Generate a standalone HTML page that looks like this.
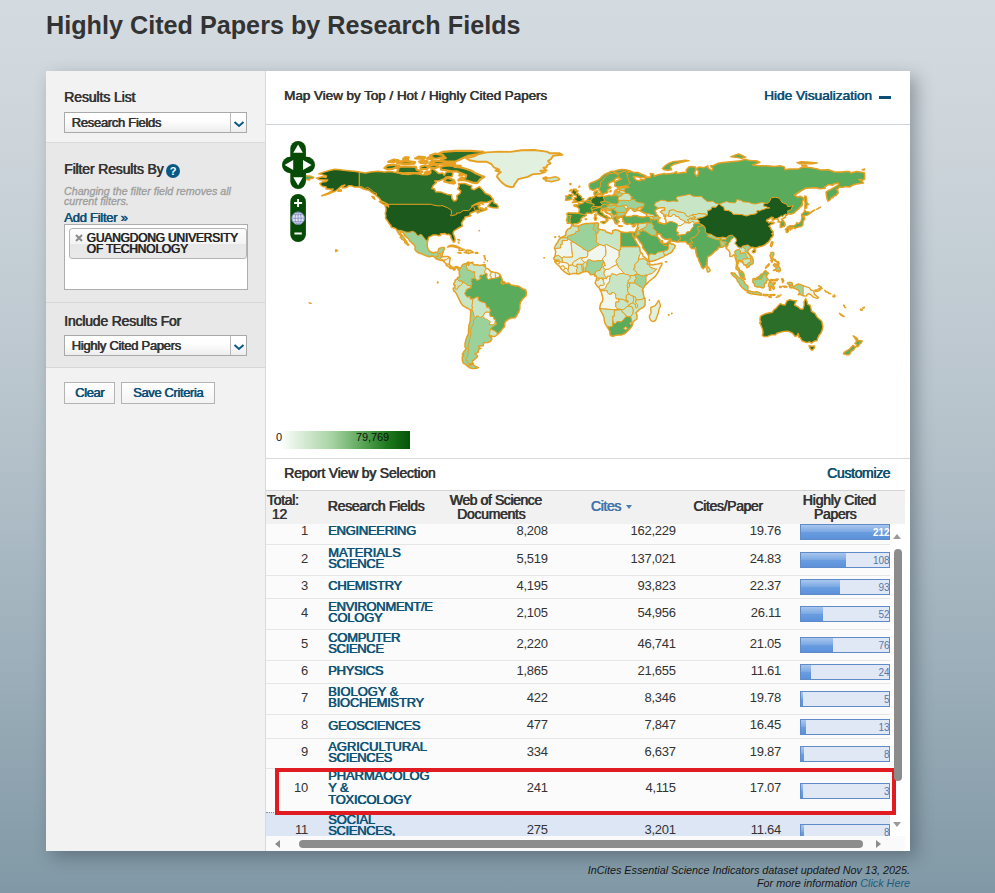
<!DOCTYPE html>
<html lang="en">
<head>
<meta charset="utf-8">
<title>Highly Cited Papers by Research Fields</title>
<style>
*{box-sizing:border-box;margin:0;padding:0}
html,body{width:995px;height:893px;overflow:hidden}
body{font-family:"Liberation Sans",Arial,sans-serif;color:#333;position:relative;
 background:linear-gradient(180deg,#d4dbe0 0px,#cdd5db 140px,#b9c5cd 400px,#9eb0bb 650px,#8199a6 893px);}
.abs{position:absolute}
/* synthetic-bold look: regular glyphs, slightly thickened */
.fb{font-weight:normal;-webkit-text-stroke:.2px currentColor;text-shadow:.55px 0 0 currentColor}
h1{position:absolute;left:46px;top:9.5px;font-size:25.2px;line-height:30px;font-weight:bold;color:#333;white-space:nowrap}
#panel{position:absolute;left:46px;top:71px;width:864px;height:780px;background:#fff;box-shadow:6px 6px 16px rgba(40,50,60,.38)}
#side{position:absolute;left:0;top:0;width:220px;height:780px;background:#f2f2f2;border-right:1px solid #d9d9d9}
.sec{position:absolute;left:0;width:219px}
.lbl{position:absolute;left:18px;font-size:14px;color:#333;white-space:nowrap;line-height:16px;letter-spacing:-.22px}
.sel{position:absolute;left:18px;width:183px;height:21px;border:1px solid #a9a9a9;background:linear-gradient(#fff 0,#fdfdfd 45%,#ededed 100%);font-size:13px;color:#333;line-height:19px;padding-left:6.5px;white-space:nowrap;letter-spacing:-.3px}
.sel i{position:absolute;right:0;top:0;width:16px;height:19px;border-left:1px solid #b9b9b9}
.btn{position:absolute;height:22px;border:1px solid #b3b3b3;background:linear-gradient(#fff,#f3f3f3);font-size:13px;color:#0b4f77;line-height:20px;text-align:center;white-space:nowrap;letter-spacing:-.38px}
#main{position:absolute;left:220px;top:0;width:644px;height:780px;background:#fff}
.link{color:#0b4f77}
.row{position:absolute;left:0;width:624px;border-bottom:1px solid #e6e6e6}
.row .num{position:absolute;font-size:13px;line-height:16px;color:#333;white-space:nowrap;letter-spacing:-.25px}
.row .nm{position:absolute;font-size:13px;color:#0b5275;white-space:nowrap}
.bar{position:absolute;left:534px;width:90px;height:16px;border:1px solid #5f8cc9;background:#e1e8f5;display:block}
.bar i{position:absolute;left:0;top:0;height:14px;background:linear-gradient(#a9c6ee 0,#7ca9e4 48%,#6a9de0 52%,#5c91da 100%)}
.bar b{position:absolute;right:-.5px;top:1px;font-size:10px;line-height:14px;font-weight:normal;color:#5877a6;letter-spacing:-.1px}
.bar b.w{color:#fff;font-weight:bold}
</style>
</head>
<body>
<h1>Highly Cited Papers by Research Fields</h1>
<div id="panel">
 <div id="side">
  <div class="sec" style="top:0;height:72px;background:#f2f2f2;border-bottom:1px solid #dadada"></div>
  <div class="lbl fb" style="top:18px;letter-spacing:-.1px">Results List</div>
  <div class="sel fb" style="top:41px">Research Fields<i><svg width="16" height="19" viewBox="0 0 16 19"><path d="M3.5 9 L8 13 L12.5 9" fill="none" stroke="#0b5a86" stroke-width="2"/></svg></i></div>

  <div class="sec" style="top:72px;height:160px;background:#e8e8e8;border-bottom:1px solid #d6d6d6"></div>
  <div class="lbl fb" style="top:90px;letter-spacing:-.15px">Filter Results By</div>
  <div class="abs" style="left:120px;top:92.5px;width:14px;height:14px;border-radius:7px;background:#075985;color:#fff;font-size:11px;font-weight:bold;line-height:14px;text-align:center">?</div>
  <div class="abs" style="left:18px;top:114.8px;font-size:10.7px;line-height:10.6px;font-style:italic;color:#9c9c9c;white-space:nowrap;-webkit-text-stroke:.3px #9c9c9c">Changing the filter field removes all<br>current filters.</div>
  <div class="abs link fb" style="left:18px;top:139px;font-size:13px;line-height:15px;white-space:nowrap;letter-spacing:-.25px">Add Filter »</div>
  <div class="abs" style="left:18px;top:153px;width:184px;height:66px;background:#fff;border:1px solid #adadad"></div>
  <div class="abs" style="left:23px;top:157px;width:178px;height:31px;border:1px solid #b5b5b5;border-radius:3px;background:linear-gradient(#fcfcfc 0,#f4f4f4 50%,#e7e7e7 52%,#e9e9e9 100%)"></div>
  <svg class="abs" style="left:29px;top:163px" width="8" height="8" viewBox="0 0 8 8"><path d="M1 1L7 7M7 1L1 7" stroke="#8a8a8a" stroke-width="2"/></svg>
  <div class="abs fb" style="left:40.5px;top:161.8px;font-size:12px;line-height:11px;color:#222;white-space:nowrap;letter-spacing:-.2px">GUANGDONG UNIVERSITY<br>OF TECHNOLOGY</div>

  <div class="sec" style="top:232px;height:65px;background:#e8e8e8;border-bottom:1px solid #d6d6d6"></div>
  <div class="lbl fb" style="top:242px;letter-spacing:-.2px">Include Results For</div>
  <div class="sel fb" style="top:264px">Highly Cited Papers<i><svg width="16" height="19" viewBox="0 0 16 19"><path d="M3.5 9 L8 13 L12.5 9" fill="none" stroke="#0b5a86" stroke-width="2"/></svg></i></div>

  <div class="btn fb" style="left:18px;top:311px;width:51px">Clear</div>
  <div class="btn fb" style="left:75px;top:311px;width:94px">Save Criteria</div>
 </div>
 <div id="main">
  <div class="abs fb" style="left:18px;top:17px;font-size:13.4px;line-height:16px;white-space:nowrap;color:#333">Map View by Top / Hot / Highly Cited Papers</div>
  <div class="abs link fb" style="left:498px;top:17px;font-size:13.6px;line-height:16px;white-space:nowrap">Hide Visualization</div>
  <div class="abs" style="left:613px;top:24.5px;width:12px;height:3px;background:#0b4f77"></div>
  <div class="abs" style="left:0;top:53px;width:644px;height:1px;background:#cfd4d8"></div>
<svg class="abs" style="left:0;top:54px" width="644" height="333" viewBox="266 125 644 333">
<defs>
<clipPath id="cAm"><path d="M316.5,178.2 322.2,176.8 326.1,177.4 326.4,176.0 323.0,174.9 319.0,173.8 324.6,171.9 329.3,170.5 334.8,169.2 341.9,170.0 348.2,170.7 354.5,171.3 359.2,171.9 365.5,172.9 370.2,171.9 378.1,171.3 384.4,172.1 390.7,171.6 400.1,173.2 401.7,174.1 408.0,174.6 411.2,174.0 414.3,173.2 422.2,174.7 426.9,174.7 430.0,173.8 430.0,171.9 431.6,168.3 435.2,170.5 437.1,172.1 438.7,173.6 442.6,173.0 444.2,175.2 446.6,171.9 452.1,171.8 452.9,173.6 452.1,176.5 445.8,177.1 444.2,178.7 439.5,180.7 434.8,180.9 436.3,182.6 433.2,185.5 431.9,188.6 434.8,189.1 435.6,191.8 441.1,192.1 447.4,194.4 451.6,194.7 451.8,198.1 453.7,200.9 456.0,200.4 457.1,198.8 456.8,195.7 460.0,193.3 460.8,191.0 457.6,188.9 459.2,186.2 458.4,183.4 464.7,183.4 468.6,185.0 471.8,185.8 471.3,188.6 474.1,189.7 478.1,187.3 479.3,186.6 482.8,190.2 485.2,193.3 489.9,195.2 492.2,198.1 493.3,199.6 491.5,200.6 486.7,202.5 480.4,202.3 475.7,203.9 471.8,206.2 474.1,205.0 479.6,204.2 480.0,205.5 478.1,206.4 479.2,208.8 481.2,209.1 484.4,209.4 486.1,207.5 487.0,209.1 485.2,210.2 481.2,211.3 477.3,213.0 477.0,211.7 479.6,210.2 475.7,210.6 475.4,211.3 472.6,212.2 470.2,213.3 469.9,215.4 471.0,215.8 468.6,216.3 465.2,217.1 464.7,217.7 464.4,219.3 463.1,220.4 462.2,222.0 461.5,223.2 461.9,224.5 462.3,226.1 460.0,227.2 458.4,228.1 456.5,229.4 453.8,231.1 453.0,233.2 454.5,236.8 455.1,239.3 454.8,241.7 453.5,242.0 452.4,240.2 451.0,237.7 450.8,235.7 448.9,234.3 446.9,234.7 445.0,233.6 442.6,233.8 440.3,234.0 440.6,235.5 438.7,235.7 436.3,234.9 433.2,234.9 431.6,235.8 428.5,237.4 427.8,240.6 427.2,243.7 427.2,246.4 428.2,249.1 429.7,251.3 431.6,252.2 432.9,252.8 435.6,252.2 437.9,251.9 438.7,249.2 439.0,248.4 441.9,247.6 444.2,247.6 444.5,248.8 443.4,250.8 443.0,252.7 442.3,253.9 442.2,255.5 441.4,256.5 442.6,256.8 445.8,256.5 448.2,256.6 450.2,257.9 449.7,261.0 449.4,263.4 449.7,265.0 451.3,266.5 452.9,267.6 455.2,267.0 456.8,266.4 459.2,267.8 460.0,268.9 461.5,266.9 462.3,265.0 463.4,264.2 466.3,263.4 468.6,262.0 468.9,262.9 468.0,264.2 468.5,265.4 469.4,263.7 471.0,262.4 473.3,263.9 474.1,265.0 477.3,264.8 479.6,265.4 483.6,264.7 483.9,265.8 485.2,266.5 485.9,268.1 488.3,268.9 490.7,271.6 493.8,272.2 496.2,272.4 498.5,273.6 500.1,274.7 501.7,278.4 502.5,280.7 501.7,281.5 504.8,282.3 505.6,283.4 508.8,283.1 511.1,285.0 512.7,285.3 515.9,286.1 518.2,285.9 520.6,287.3 522.9,289.1 525.6,289.7 526.4,292.5 526.1,295.7 522.9,298.8 520.6,302.0 519.8,305.1 519.8,309.1 518.7,312.2 516.8,315.5 515.1,317.7 511.1,318.0 508.3,319.3 505.6,321.3 504.7,323.2 504.7,326.4 502.5,328.7 500.9,331.1 498.5,333.5 497.0,335.0 494.8,336.5 492.7,336.5 489.4,335.2 491.1,337.4 491.9,339.0 490.5,341.3 488.3,342.4 483.6,342.7 483.3,345.7 478.9,345.9 479.0,347.6 480.9,348.4 479.5,349.0 478.5,350.0 478.1,352.4 474.9,353.9 477.3,355.5 477.6,356.8 474.9,359.1 472.6,361.0 472.6,362.7 473.5,364.0 471.6,364.0 469.6,364.8 469.4,366.2 467.0,365.7 465.5,364.2 463.4,363.4 462.3,360.2 462.2,357.1 463.9,355.2 462.3,354.7 463.9,351.6 466.3,348.4 465.0,347.3 465.0,343.7 465.8,340.1 466.7,337.4 468.3,334.2 468.6,328.7 468.9,325.6 470.2,321.6 470.5,316.1 470.7,311.4 470.4,310.3 468.6,308.7 465.5,307.2 462.8,305.6 461.1,303.2 459.6,300.4 458.1,297.2 456.8,294.4 455.4,292.2 453.7,290.9 453.2,288.6 454.8,286.9 455.2,285.4 453.8,285.0 454.0,283.1 455.2,281.5 455.2,280.2 457.1,279.0 457.6,277.6 459.5,277.1 459.6,275.5 459.2,272.8 459.5,270.8 458.5,270.2 457.8,268.7 456.0,267.5 454.6,268.4 455.2,269.8 453.7,270.0 453.2,269.2 452.1,268.6 450.5,268.4 449.6,268.0 449.4,267.2 447.7,266.2 446.1,265.3 446.3,264.2 445.0,262.6 443.3,261.2 443.1,260.6 441.1,260.4 438.7,259.8 436.0,258.7 434.0,256.6 431.9,256.0 429.3,256.8 426.1,255.8 423.8,254.9 420.9,253.5 418.2,252.7 415.9,250.8 414.8,249.2 415.4,247.6 414.3,245.3 411.9,242.9 409.6,241.0 408.8,239.0 407.2,237.6 404.9,235.8 403.3,232.7 400.4,231.4 400.6,233.5 402.5,235.8 404.1,238.2 406.0,240.6 407.2,242.9 408.8,245.0 408.0,245.4 407.1,244.3 404.9,242.6 404.5,240.6 401.7,239.0 401.2,237.7 400.1,237.7 401.2,236.2 398.9,234.0 397.3,231.1 396.7,230.2 396.5,229.2 394.8,228.3 393.5,227.7 391.3,227.2 390.7,225.1 389.3,223.9 388.3,222.0 387.5,220.9 386.3,219.3 385.5,217.9 385.8,215.4 385.2,213.8 386.0,210.6 386.0,208.6 384.9,205.5 387.9,205.8 388.5,207.0 388.3,205.1 387.5,204.3 386.7,203.6 384.7,202.8 382.0,201.5 380.5,200.4 379.7,198.8 378.1,197.3 376.2,195.7 375.7,194.9 374.2,194.1 371.0,191.8 367.9,189.7 366.3,189.9 364.2,189.2 361.1,187.7 358.4,187.0 354.5,187.0 351.3,185.8 348.2,185.8 347.4,187.0 345.0,187.8 342.2,188.1 343.5,186.2 345.0,185.1 341.9,185.8 339.5,187.8 338.4,188.9 335.6,191.0 332.4,192.2 328.5,194.1 325.3,194.9 321.7,195.7 324.6,194.4 327.7,193.3 331.6,191.0 333.2,189.1 330.9,189.2 328.5,188.9 326.1,189.1 326.1,187.0 322.2,186.2 320.6,184.7 319.8,183.4 321.7,182.6 322.2,182.0 326.1,181.5 327.7,179.9 324.6,179.9 319.8,179.8Z"/></clipPath>
<clipPath id="cEu"><path clip-rule="evenodd" d="M621.8,169.6 625.3,169.7 630.0,170.8 628.4,171.8 631.6,171.6 633.9,172.4 637.9,172.5 641.0,174.0 645.8,175.7 645.8,176.8 644.2,177.3 641.0,177.4 636.3,176.8 633.2,176.5 636.0,179.9 639.5,180.9 641.0,180.3 640.2,179.2 644.2,179.8 645.0,178.4 647.3,177.0 650.5,177.3 650.8,174.7 650.2,173.6 653.6,174.1 654.4,176.2 656.8,175.1 664.6,173.6 666.2,174.1 670.9,173.5 674.1,173.0 676.5,171.6 676.8,173.5 682.8,172.5 686.4,172.4 686.2,169.7 689.1,166.9 690.6,166.6 695.4,166.9 695.8,169.4 694.6,173.2 696.9,176.3 698.0,174.4 698.5,171.3 696.1,168.9 699.0,166.9 704.0,167.7 707.9,165.8 707.9,167.8 711.9,170.5 712.7,168.5 710.3,165.9 713.5,165.5 718.2,163.3 722.9,162.5 730.8,161.7 738.7,161.1 745.4,159.2 749.7,160.6 757.5,161.1 759.9,162.2 752.8,165.0 756.0,165.5 759.1,165.8 767.0,165.8 774.9,166.6 780.4,165.8 784.3,166.9 785.1,169.7 789.0,168.9 793.8,168.9 798.5,168.9 801.6,167.3 803.2,166.9 811.1,167.7 817.4,168.9 820.5,169.9 828.4,169.7 833.1,171.3 833.9,171.9 841.0,172.1 845.7,171.4 849.7,171.4 850.4,172.9 856.7,171.6 861.5,172.2 864.6,173.0 864.6,179.0 862.2,180.3 860.7,179.6 859.1,179.5 862.2,181.5 863.5,183.1 859.9,183.4 855.2,184.2 852.0,185.5 849.7,187.0 845.7,186.6 842.6,187.3 838.6,187.2 838.3,188.6 836.3,189.7 837.8,190.5 838.2,193.0 836.3,194.9 836.3,195.4 833.1,196.5 833.1,197.7 830.8,198.1 830.4,199.6 827.9,201.2 826.8,198.1 826.3,194.9 826.0,192.1 828.1,190.7 830.8,189.4 835.5,186.7 838.6,184.7 838.3,183.1 833.1,184.2 832.8,185.3 828.4,184.5 824.5,187.3 825.2,188.3 820.5,188.8 818.9,188.4 815.8,187.7 810.3,188.0 805.6,188.3 801.6,190.5 798.5,192.5 794.5,195.2 796.9,196.5 797.7,197.1 800.1,196.2 803.2,197.7 803.8,199.3 802.4,201.2 802.4,202.8 802.3,205.1 800.1,207.2 798.5,209.1 796.1,211.0 794.2,212.9 790.6,214.3 789.0,213.5 787.0,214.9 785.4,216.2 785.4,217.3 781.9,219.0 781.9,219.8 783.2,220.7 784.9,223.2 785.1,225.1 784.3,226.2 782.4,226.9 780.4,227.5 780.1,225.6 780.7,223.2 779.9,222.1 778.0,222.0 778.5,220.6 778.0,219.1 777.1,218.7 774.1,219.3 772.5,220.3 772.0,219.3 773.3,217.6 771.7,217.1 769.4,218.7 767.0,219.8 766.5,220.9 768.3,221.8 768.6,222.9 771.2,222.0 774.1,222.6 773.9,223.4 771.2,224.3 769.0,226.2 770.5,227.5 771.4,229.9 773.0,231.4 773.1,232.8 771.7,233.8 773.3,234.4 772.7,236.6 771.2,237.7 769.7,240.6 768.6,241.8 767.0,243.1 765.4,244.5 763.8,245.4 761.2,246.4 759.9,246.5 757.2,247.5 755.0,248.0 754.7,249.5 753.9,247.6 752.0,247.3 751.2,247.6 749.4,248.8 748.1,250.8 747.6,251.9 748.9,253.5 750.5,255.5 751.7,256.3 752.8,258.7 753.3,261.0 753.1,262.9 752.0,264.2 750.0,265.1 749.2,266.5 746.8,267.8 746.2,266.1 745.7,265.1 744.2,265.0 743.4,263.7 742.6,262.6 741.0,261.5 740.1,261.5 740.1,260.4 738.7,260.4 738.5,262.3 737.4,265.0 737.5,266.9 739.1,268.4 739.4,270.2 741.0,270.8 742.1,271.7 743.7,273.6 744.2,275.2 744.0,277.1 745.3,279.3 744.2,279.5 742.6,278.2 740.7,276.9 739.8,275.2 739.1,272.8 739.0,271.3 738.2,270.5 736.0,268.9 736.0,267.3 736.4,265.3 736.6,262.9 736.3,261.0 735.2,257.9 734.9,255.5 733.8,254.7 731.6,256.6 729.7,256.3 730.0,253.9 729.7,251.9 728.4,250.3 727.3,249.2 726.5,248.8 725.7,246.4 724.2,245.8 722.9,247.0 721.3,247.2 720.1,247.3 718.2,247.8 717.9,249.1 716.6,250.2 715.0,251.1 713.5,252.7 710.8,255.2 709.2,256.0 707.6,257.1 707.3,260.2 707.0,262.6 707.0,265.3 705.9,265.4 705.6,266.9 704.3,267.5 703.2,268.7 701.6,267.3 700.9,265.0 699.8,262.6 699.0,261.0 698.2,258.2 696.9,256.3 696.1,253.2 695.8,251.3 695.7,248.8 695.5,247.2 694.9,248.4 693.0,248.8 691.4,248.3 689.8,246.4 691.9,245.4 690.2,245.4 689.4,244.8 688.6,244.2 687.3,243.7 686.2,242.3 685.9,241.5 682.8,241.8 679.6,241.8 678.2,242.0 675.7,241.7 673.8,241.2 671.4,241.0 670.9,239.3 669.8,238.8 667.3,239.6 664.6,239.0 662.3,237.6 661.2,236.0 660.4,234.3 658.4,233.6 657.7,234.4 656.8,234.4 656.8,235.4 657.4,236.6 658.4,238.2 659.9,239.5 660.2,241.2 661.2,242.5 661.8,240.6 662.4,240.9 662.3,242.8 663.9,243.4 666.2,243.6 668.3,241.7 669.5,240.4 670.0,240.1 670.0,242.3 670.9,243.7 673.5,244.3 675.4,246.1 674.6,247.8 673.3,249.4 672.2,251.7 670.2,253.2 668.3,253.9 667.5,254.7 664.8,255.4 663.4,256.9 660.7,257.9 658.4,259.1 656.0,260.1 652.8,260.9 652.1,261.3 649.7,261.5 649.2,260.6 648.6,258.2 648.6,255.7 647.3,253.9 646.1,251.9 644.2,249.5 642.8,248.0 642.6,246.1 641.8,244.0 639.9,242.3 639.8,241.4 638.7,240.1 637.1,237.9 636.0,237.3 636.2,235.1 635.4,237.4 635.0,237.9 633.9,236.9 633.2,235.8 632.5,234.4 632.1,232.2 635.0,232.2 636.2,230.3 636.5,229.2 637.3,227.5 637.7,225.6 638.2,223.9 637.1,223.9 635.5,223.7 634.3,224.5 632.4,224.7 629.4,223.6 627.6,224.5 625.6,223.7 624.2,223.2 624.0,221.8 622.6,221.2 623.4,220.1 622.5,219.3 622.5,218.2 622.1,217.3 620.6,217.1 619.5,217.4 619.0,218.2 618.7,218.7 617.9,218.2 616.9,217.7 616.8,218.5 617.4,219.6 617.9,220.4 619.0,221.4 619.0,222.1 618.2,221.8 617.7,222.6 617.7,224.0 616.6,224.0 616.2,223.2 615.4,223.6 614.6,222.0 615.1,221.2 614.3,220.9 613.9,220.1 613.0,219.1 611.7,217.7 611.7,216.0 611.4,215.5 610.3,214.6 608.8,213.8 606.4,213.0 605.1,211.9 604.7,210.6 603.7,210.2 602.8,210.5 602.6,210.8 602.6,209.7 602.0,209.5 600.7,210.0 600.6,211.0 600.7,211.9 602.6,213.0 603.6,214.7 605.1,215.5 606.7,215.7 606.4,216.3 608.3,217.1 610.3,218.4 610.0,218.8 608.3,217.9 607.3,219.0 608.1,220.1 607.2,221.0 606.4,221.8 605.9,221.4 606.4,220.4 605.9,218.5 604.5,217.6 603.4,217.3 602.5,216.6 600.6,215.8 598.8,214.7 597.7,214.0 597.3,212.4 596.2,211.7 595.1,211.6 594.1,212.2 593.0,212.5 591.6,213.6 589.7,213.3 588.8,213.2 587.5,213.0 586.2,213.5 585.9,214.6 586.2,215.5 584.7,216.5 582.8,216.9 582.0,217.7 580.7,219.3 581.4,220.4 580.4,221.2 580.1,222.3 578.4,222.9 577.7,223.7 574.3,223.7 572.9,224.7 571.8,224.5 571.1,223.6 569.9,222.9 568.6,223.2 567.2,223.2 567.3,221.0 566.4,220.6 566.7,219.3 567.3,217.7 567.3,215.7 567.2,214.6 566.6,213.8 568.6,212.7 570.2,212.9 572.5,212.9 575.2,213.0 578.4,213.2 579.2,211.4 579.3,209.5 579.3,208.8 577.7,207.3 576.8,206.7 574.3,206.2 573.8,205.3 575.7,204.7 578.1,205.0 578.7,205.0 578.5,203.2 579.3,203.7 581.4,203.6 583.6,202.6 583.7,201.4 585.3,201.0 586.7,200.6 587.5,199.6 588.6,198.2 589.7,197.6 592.1,197.4 592.5,196.9 594.6,197.1 594.7,196.0 594.7,195.1 594.0,194.1 594.1,192.2 594.7,191.6 596.9,190.8 597.9,190.7 597.6,192.5 598.2,192.9 597.3,193.6 596.6,194.6 596.3,195.2 596.9,195.8 598.5,196.5 600.4,196.2 602.5,195.8 603.6,196.6 606.4,196.0 610.0,195.2 610.6,195.8 612.1,195.8 612.7,195.1 614.3,194.4 614.3,192.1 615.1,191.0 616.8,190.7 617.7,191.8 619.5,191.4 619.6,189.7 618.2,189.1 618.0,188.3 620.6,187.8 625.3,187.8 628.7,187.2 626.1,186.2 622.1,186.4 617.4,187.2 614.7,185.8 615.1,183.1 614.4,182.3 616.6,181.0 619.8,179.5 621.2,179.0 619.3,177.9 616.3,178.1 614.7,179.5 613.8,181.0 611.1,182.0 609.2,183.1 608.4,184.7 608.3,186.1 610.5,186.9 611.0,187.7 609.2,188.9 607.5,190.0 607.2,191.8 606.4,193.0 604.3,193.2 603.6,194.3 601.7,194.3 601.2,193.0 599.9,191.0 598.8,188.8 597.9,188.1 596.2,188.8 594.1,190.0 592.2,190.2 590.2,189.1 589.4,187.3 589.1,185.5 589.4,183.9 591.4,182.6 594.6,181.5 596.9,180.4 599.3,179.2 600.9,177.6 602.5,176.0 604.0,174.7 606.1,173.6 608.8,172.4 611.1,171.4 615.1,171.0 618.2,170.0Z M626.9,216.6 630.8,216.6 633.6,215.4 636.6,215.4 638.7,216.5 641.8,217.1 644.5,216.9 646.5,216.2 646.9,215.1 645.8,213.8 643.4,212.7 641.3,211.6 639.9,211.0 639.0,210.3 640.2,209.9 641.5,208.8 642.9,207.3 641.3,207.3 639.1,207.8 636.8,208.4 636.3,209.5 638.7,210.2 637.1,210.6 635.0,211.4 633.9,211.3 632.4,210.0 634.1,209.1 631.6,208.8 630.5,208.1 629.5,208.6 628.0,210.2 627.8,210.8 626.4,211.9 626.2,213.0 625.1,214.1 625.3,215.4 625.6,216.2Z M654.9,211.1 656.0,209.5 658.4,208.3 661.5,207.7 664.6,207.8 664.6,210.2 662.0,210.3 661.5,211.4 660.4,211.6 662.3,213.5 663.9,214.6 663.9,216.2 665.9,216.6 664.5,218.5 665.8,219.8 666.1,222.5 665.9,223.4 663.1,223.9 660.4,222.8 658.4,222.3 658.2,221.0 658.7,219.6 659.1,218.0 660.4,218.0 659.1,217.6 657.9,215.7 656.0,213.8 656.0,212.5Z"/></clipPath>
<clipPath id="cAf"><path d="M632.5,234.4 632.1,232.2 630.0,231.9 628.1,232.5 624.5,232.4 620.9,231.7 617.7,230.3 615.1,229.7 612.8,230.6 612.7,232.7 611.6,233.8 608.8,232.8 605.6,231.7 605.3,230.6 601.7,229.7 599.3,229.2 597.3,228.3 598.2,227.0 598.2,225.4 598.4,223.4 597.3,222.8 595.4,222.9 592.2,223.2 589.1,223.6 585.9,223.4 582.8,224.2 579.6,225.4 577.7,226.2 576.5,225.9 573.8,226.1 572.7,225.0 571.8,225.3 570.5,228.0 567.8,229.1 566.2,231.4 565.8,233.5 565.8,235.1 563.6,236.5 560.7,237.7 558.8,239.9 557.6,242.5 556.0,244.5 554.4,248.0 555.2,250.0 555.7,251.6 555.2,255.5 553.6,258.4 554.7,260.2 554.9,262.0 556.3,263.4 557.7,264.8 559.6,266.4 560.4,267.8 562.0,269.7 563.3,270.8 566.2,273.0 569.2,274.6 572.5,273.6 576.2,273.5 578.1,274.1 581.2,272.7 583.1,272.1 585.5,271.6 588.0,271.6 589.4,273.0 590.6,274.7 593.0,274.6 594.6,274.3 595.4,275.4 596.5,276.5 596.6,277.9 596.2,279.9 595.7,281.5 595.1,282.8 596.2,284.6 597.7,286.5 599.6,288.6 600.4,290.6 601.4,292.5 602.1,295.0 602.9,298.3 602.5,301.2 600.9,303.2 600.1,305.6 599.8,308.6 600.9,311.1 602.9,314.6 604.0,317.4 604.2,320.1 605.0,323.4 607.0,326.5 608.3,328.7 609.9,331.6 609.9,333.3 610.2,335.2 611.6,336.0 612.7,336.3 616.2,335.2 618.2,335.0 621.3,335.0 624.5,333.8 626.1,332.5 628.4,330.3 630.0,328.4 631.6,326.7 632.8,324.0 633.0,322.3 634.7,320.5 636.9,319.0 637.1,316.1 636.3,313.8 636.0,312.7 637.9,311.1 639.5,309.4 643.1,307.5 645.1,305.1 645.1,302.0 645.0,298.5 643.9,296.9 643.4,294.1 643.1,292.2 642.3,290.9 642.9,288.9 643.7,287.5 645.0,285.4 646.5,284.2 648.6,281.8 651.3,279.5 653.9,277.7 656.5,274.7 658.4,271.6 659.6,268.7 661.2,265.8 661.8,265.0 662.0,262.9 659.9,263.4 657.6,263.9 654.4,264.5 651.3,265.1 649.4,263.6 649.2,262.8 649.4,261.8 648.1,260.6 646.1,258.5 644.2,256.9 643.1,256.5 642.8,254.7 641.8,253.2 640.2,251.9 639.9,249.2 639.5,247.2 638.7,246.1 637.3,243.9 636.3,242.1 635.0,239.8 634.1,237.7 633.0,236.2Z"/></clipPath>
<clipPath id="cBo"><path d="M752.8,279.1 753.9,278.4 756.0,279.0 756.8,277.6 759.1,276.5 760.7,274.4 762.7,273.6 764.2,271.6 765.4,270.5 766.5,271.6 768.6,273.2 767.3,274.7 766.5,276.0 767.0,277.9 768.6,279.9 766.7,280.6 766.2,282.8 764.6,283.9 764.3,286.2 763.8,287.8 761.8,287.8 759.9,286.9 757.2,287.0 754.7,286.2 754.4,283.9 752.8,282.3 752.8,280.7Z"/></clipPath>
<clipPath id="cNg"><path d="M787.5,282.8 789.8,282.1 792.2,282.8 792.5,285.3 793.8,286.7 796.1,285.0 798.5,284.0 803.2,285.6 806.4,286.9 809.2,287.6 811.1,290.2 813.4,290.9 814.1,292.5 814.2,294.1 816.6,296.0 818.6,297.6 817.4,298.3 813.4,297.2 811.1,294.9 808.7,293.6 807.1,294.6 806.4,296.1 803.2,295.8 800.1,294.4 798.2,294.7 799.7,292.8 798.5,290.2 794.5,288.4 791.4,287.5 790.3,288.0 789.0,285.9 791.4,285.3 789.3,285.0 787.5,283.7Z"/></clipPath>
<clipPath id="cIr"><path d="M565.5,200.3 568.3,200.1 571.4,199.3 571.8,197.3 572.4,195.7 571.4,194.6 569.4,194.4 568.0,195.7 565.5,196.2 566.2,197.6 565.8,198.8Z"/></clipPath>
<clipPath id="cTi"><path d="M775.7,297.7 778.0,295.4 781.5,294.7 780.4,296.1 778.0,297.2Z"/></clipPath>
<clipPath id="cHi"><path d="M464.1,252.5 467.0,253.0 468.5,253.6 471.0,252.7 473.5,252.5 472.1,251.3 470.2,250.3 468.2,250.3 465.8,250.2 466.9,251.6 464.7,252.1Z"/></clipPath>
</defs>
<g stroke="#e6a022" stroke-width="1" stroke-linejoin="round">
<g clip-path="url(#cAm)">
<rect x="266" y="125" width="330" height="333" fill="#c8e6c5" stroke="none"/>
<path d="M359.2,166.6 502.5,166.6 502.5,216.9 359.2,216.9Z" fill="#2a6e2a"/>
<path d="M392.3,228.8 447.4,228.8 447.4,261.0 392.3,261.0Z" fill="#9bd29b"/>
<path d="M387.1,204.3 431.3,204.3 432.3,204.8 437.1,205.8 440.3,205.9 442.0,205.5 447.7,207.8 449.7,209.1 451.3,210.2 451.5,213.8 450.4,215.4 451.3,215.8 455.2,214.9 456.8,214.1 456.5,213.0 460.3,212.9 461.1,211.9 463.1,210.6 468.6,210.6 469.7,210.0 470.7,208.6 472.2,206.9 473.7,207.0 474.4,207.5 474.4,209.4 475.1,210.3 475.7,211.0 486.7,218.5 486.7,243.7 455.2,246.9 428.3,240.7 425.3,239.9 424.5,238.2 423.0,236.6 421.4,234.6 419.8,234.6 418.7,235.8 416.7,234.9 416.0,233.3 413.5,231.4 410.8,231.4 410.8,232.2 406.4,232.2 400.4,230.3 396.8,230.3 384.4,231.1 376.5,204.3Z" fill="#1b5a1c"/>
<path d="M359.2,166.6 359.2,186.6 362.3,186.9 364.7,188.6 367.9,187.5 371.8,190.2 373.7,192.2 376.5,193.3 376.5,195.4 368.6,196.5 313.5,202.8 313.5,166.6Z" fill="#1b5a1c"/>
<path d="M435.9,258.7 436.0,257.6 436.8,256.2 438.9,256.2 437.9,254.4 437.9,253.5 440.8,253.5 440.8,256.5 442.3,256.6 440.8,257.9 440.4,258.8 439.3,259.9 437.9,260.6 435.2,259.5Z" fill="#9bd29b"/>
<path d="M440.8,253.3 442.0,252.4 444.2,252.4 444.2,256.5 440.8,256.5Z" fill="#f1f7ef"/>
<path d="M439.3,259.9 440.4,258.8 441.9,259.5 443.0,259.6 443.1,260.7 442.6,261.2 439.2,260.7Z" fill="#f1f7ef"/>
<path d="M440.6,258.8 440.8,257.9 442.3,256.6 442.6,255.7 450.5,255.7 450.4,258.0 447.8,258.4 446.1,259.8 444.5,259.9 444.7,260.7 443.7,261.2 443.0,260.6 443.0,259.6 441.9,259.5Z" fill="#f1f7ef"/>
<path d="M450.4,258.0 447.8,258.4 446.1,259.8 444.5,259.9 444.7,260.7 443.7,261.2 442.6,261.8 445.8,264.5 446.3,264.0 447.8,264.2 449.4,264.3 450.5,264.2 451.3,257.9Z" fill="#f1f7ef"/>
<path d="M446.3,264.0 447.8,264.2 449.4,264.3 450.5,265.0 451.1,266.4 450.7,266.5 450.7,268.9 448.9,269.1 445.0,266.1 445.5,264.2Z" fill="#c8e6c5"/>
<path d="M451.1,266.2 450.7,266.5 450.7,269.1 453.7,270.8 458.4,270.8 458.5,270.2 459.6,269.1 459.3,267.8 460.0,267.0 456.8,265.8 452.1,265.9Z" fill="#c8e6c5"/>
<path d="M464.7,315.8 497.8,315.8 497.8,369.7 464.7,369.7Z" fill="#9bd29b"/>
<path d="M470.4,310.3 471.8,309.1 473.3,312.2 473.8,315.4 475.7,317.7 473.7,320.1 473.3,324.0 471.3,327.9 470.2,331.1 471.0,333.9 470.2,337.4 469.1,342.1 468.2,346.1 468.3,350.0 468.2,353.1 467.4,356.3 465.8,359.4 467.4,361.5 467.8,363.4 473.5,364.0 471.0,369.7 455.2,369.7 455.2,308.3Z" fill="#9bd29b"/>
<path d="M489.2,335.0 489.6,333.5 489.9,331.1 490.5,329.0 493.0,330.0 493.7,330.2 496.5,332.0 497.4,333.0 497.1,334.6 499.3,335.0 497.8,338.2 489.1,336.6Z" fill="#c8e6c5"/>
<path d="M482.6,316.5 485.2,312.2 488.1,311.9 489.6,312.7 490.0,314.1 490.2,316.3 493.0,316.6 493.7,317.1 494.0,319.3 495.7,319.4 495.2,321.8 494.9,323.5 493.3,324.6 492.2,324.8 488.9,324.5 490.5,321.8 488.6,320.5 486.7,319.3 485.2,318.7Z" fill="#f1f7ef"/>
<path d="M471.8,309.1 472.6,307.0 471.6,305.9 472.1,304.8 472.7,301.2 471.8,298.7 473.3,298.8 476.3,297.1 478.4,296.9 478.4,300.1 480.0,301.2 482.3,302.0 485.2,302.8 486.3,305.1 486.6,307.2 489.2,307.2 489.4,308.7 490.5,309.8 490.2,311.4 489.6,312.7 488.1,311.9 485.2,312.2 482.6,316.5 480.0,317.4 478.5,316.3 476.8,315.8 475.7,317.7 473.8,315.4 473.3,312.2Z" fill="#c8e6c5"/>
<path d="M470.4,310.3 471.8,309.1 472.6,307.0 471.6,305.9 472.1,304.8 472.7,301.2 471.8,298.7 470.0,298.8 470.2,296.5 467.4,296.9 466.3,296.0 464.7,293.3 465.9,291.7 466.4,289.7 469.7,288.1 471.1,288.1 471.0,285.8 467.8,285.3 465.5,283.5 462.8,281.7 462.2,283.9 460.4,285.6 458.4,286.2 457.6,288.6 456.0,289.4 454.8,288.4 454.8,286.9 450.5,286.9 450.5,311.4Z" fill="#c8e6c5"/>
<path d="M454.8,286.9 454.8,288.4 456.0,289.4 457.6,288.6 458.4,286.2 460.4,285.6 462.2,283.9 462.8,281.7 461.1,280.9 459.2,280.9 457.1,279.1 452.1,279.1 452.1,286.9Z" fill="#c8e6c5"/>
<path d="M458.5,270.2 459.6,269.1 459.3,267.8 461.5,265.8 466.3,261.0 468.9,262.9 467.0,264.2 466.3,266.5 467.2,268.3 467.2,269.8 470.8,270.5 471.9,271.9 474.9,271.7 474.4,274.4 475.2,276.1 474.4,277.1 475.4,277.9 475.9,279.6 477.3,281.5 472.6,288.6 471.1,288.1 471.0,285.8 467.8,285.3 465.5,283.5 462.8,281.7 461.1,280.9 459.2,280.9 457.1,279.1 455.2,279.1 455.2,270.2Z" fill="#9bd29b"/>
<path d="M468.9,262.9 467.0,264.2 466.3,266.5 467.2,268.3 467.2,269.8 470.8,270.5 471.9,271.9 474.9,271.7 474.4,274.4 475.2,276.1 474.4,277.1 475.4,277.9 475.9,279.6 478.9,281.5 483.6,281.5 486.7,276.8 485.6,273.3 484.5,272.2 485.2,270.5 486.7,268.1 488.3,267.3 486.7,261.8 468.9,261.3Z" fill="#c8e6c5"/>
<path d="M486.7,268.1 485.2,270.5 484.5,272.2 485.6,273.3 486.6,273.3 487.0,274.4 486.7,277.2 487.2,278.7 488.5,279.5 489.9,279.1 491.5,278.5 491.0,276.3 489.9,275.2 491.1,273.3 491.3,272.1 491.5,270.5 489.9,268.1Z" fill="#f1f7ef"/>
<path d="M491.3,272.1 491.1,273.3 489.9,275.2 491.0,276.3 491.5,278.5 492.2,278.5 493.2,278.5 496.2,278.0 495.5,276.8 495.4,274.4 496.2,272.4 496.2,271.3 491.5,271.3Z" fill="#f1f7ef"/>
<path d="M496.2,272.4 495.4,274.4 495.5,276.8 496.2,278.0 498.5,277.6 500.0,274.9 500.9,273.6 498.5,271.3 496.2,271.3Z" fill="#f1f7ef"/>
<path d="M500.0,274.9 498.5,277.6 496.2,278.0 493.2,278.5 492.2,278.5 489.9,279.1 488.5,279.5 487.2,278.7 486.7,277.2 487.0,274.4 486.6,273.3 485.6,273.3 484.5,274.4 482.3,275.2 480.1,275.0 479.6,277.6 481.4,278.0 478.1,280.2 476.8,280.4 475.9,279.6 475.6,278.8 474.4,278.4 471.3,278.8 471.3,279.8 472.2,280.6 471.0,280.7 471.0,281.8 471.9,283.2 471.1,288.1 469.7,288.1 466.4,289.7 465.9,291.7 464.7,293.3 466.3,296.0 467.4,296.9 470.2,296.5 470.0,298.8 471.8,298.7 473.3,298.8 476.3,297.1 478.4,296.9 478.4,300.1 480.0,301.2 482.3,302.0 485.2,302.8 486.3,305.1 486.6,307.2 489.2,307.2 489.4,308.7 490.5,309.8 490.2,311.4 489.7,312.7 490.0,314.1 490.2,316.3 493.0,316.6 493.7,317.1 494.0,319.3 495.7,319.4 495.2,321.8 496.5,322.8 496.6,324.3 493.3,326.2 490.5,329.0 493.0,330.0 493.7,330.2 496.5,332.0 497.4,333.0 497.1,334.6 534.0,335.0 534.0,272.1Z" fill="#5aab5c"/>
</g>
<path d="M316.5,178.2 322.2,176.8 326.1,177.4 326.4,176.0 323.0,174.9 319.0,173.8 324.6,171.9 329.3,170.5 334.8,169.2 341.9,170.0 348.2,170.7 354.5,171.3 359.2,171.9 365.5,172.9 370.2,171.9 378.1,171.3 384.4,172.1 390.7,171.6 400.1,173.2 401.7,174.1 408.0,174.6 411.2,174.0 414.3,173.2 422.2,174.7 426.9,174.7 430.0,173.8 430.0,171.9 431.6,168.3 435.2,170.5 437.1,172.1 438.7,173.6 442.6,173.0 444.2,175.2 446.6,171.9 452.1,171.8 452.9,173.6 452.1,176.5 445.8,177.1 444.2,178.7 439.5,180.7 434.8,180.9 436.3,182.6 433.2,185.5 431.9,188.6 434.8,189.1 435.6,191.8 441.1,192.1 447.4,194.4 451.6,194.7 451.8,198.1 453.7,200.9 456.0,200.4 457.1,198.8 456.8,195.7 460.0,193.3 460.8,191.0 457.6,188.9 459.2,186.2 458.4,183.4 464.7,183.4 468.6,185.0 471.8,185.8 471.3,188.6 474.1,189.7 478.1,187.3 479.3,186.6 482.8,190.2 485.2,193.3 489.9,195.2 492.2,198.1 493.3,199.6 491.5,200.6 486.7,202.5 480.4,202.3 475.7,203.9 471.8,206.2 474.1,205.0 479.6,204.2 480.0,205.5 478.1,206.4 479.2,208.8 481.2,209.1 484.4,209.4 486.1,207.5 487.0,209.1 485.2,210.2 481.2,211.3 477.3,213.0 477.0,211.7 479.6,210.2 475.7,210.6 475.4,211.3 472.6,212.2 470.2,213.3 469.9,215.4 471.0,215.8 468.6,216.3 465.2,217.1 464.7,217.7 464.4,219.3 463.1,220.4 462.2,222.0 461.5,223.2 461.9,224.5 462.3,226.1 460.0,227.2 458.4,228.1 456.5,229.4 453.8,231.1 453.0,233.2 454.5,236.8 455.1,239.3 454.8,241.7 453.5,242.0 452.4,240.2 451.0,237.7 450.8,235.7 448.9,234.3 446.9,234.7 445.0,233.6 442.6,233.8 440.3,234.0 440.6,235.5 438.7,235.7 436.3,234.9 433.2,234.9 431.6,235.8 428.5,237.4 427.8,240.6 427.2,243.7 427.2,246.4 428.2,249.1 429.7,251.3 431.6,252.2 432.9,252.8 435.6,252.2 437.9,251.9 438.7,249.2 439.0,248.4 441.9,247.6 444.2,247.6 444.5,248.8 443.4,250.8 443.0,252.7 442.3,253.9 442.2,255.5 441.4,256.5 442.6,256.8 445.8,256.5 448.2,256.6 450.2,257.9 449.7,261.0 449.4,263.4 449.7,265.0 451.3,266.5 452.9,267.6 455.2,267.0 456.8,266.4 459.2,267.8 460.0,268.9 461.5,266.9 462.3,265.0 463.4,264.2 466.3,263.4 468.6,262.0 468.9,262.9 468.0,264.2 468.5,265.4 469.4,263.7 471.0,262.4 473.3,263.9 474.1,265.0 477.3,264.8 479.6,265.4 483.6,264.7 483.9,265.8 485.2,266.5 485.9,268.1 488.3,268.9 490.7,271.6 493.8,272.2 496.2,272.4 498.5,273.6 500.1,274.7 501.7,278.4 502.5,280.7 501.7,281.5 504.8,282.3 505.6,283.4 508.8,283.1 511.1,285.0 512.7,285.3 515.9,286.1 518.2,285.9 520.6,287.3 522.9,289.1 525.6,289.7 526.4,292.5 526.1,295.7 522.9,298.8 520.6,302.0 519.8,305.1 519.8,309.1 518.7,312.2 516.8,315.5 515.1,317.7 511.1,318.0 508.3,319.3 505.6,321.3 504.7,323.2 504.7,326.4 502.5,328.7 500.9,331.1 498.5,333.5 497.0,335.0 494.8,336.5 492.7,336.5 489.4,335.2 491.1,337.4 491.9,339.0 490.5,341.3 488.3,342.4 483.6,342.7 483.3,345.7 478.9,345.9 479.0,347.6 480.9,348.4 479.5,349.0 478.5,350.0 478.1,352.4 474.9,353.9 477.3,355.5 477.6,356.8 474.9,359.1 472.6,361.0 472.6,362.7 473.5,364.0 471.6,364.0 469.6,364.8 469.4,366.2 467.0,365.7 465.5,364.2 463.4,363.4 462.3,360.2 462.2,357.1 463.9,355.2 462.3,354.7 463.9,351.6 466.3,348.4 465.0,347.3 465.0,343.7 465.8,340.1 466.7,337.4 468.3,334.2 468.6,328.7 468.9,325.6 470.2,321.6 470.5,316.1 470.7,311.4 470.4,310.3 468.6,308.7 465.5,307.2 462.8,305.6 461.1,303.2 459.6,300.4 458.1,297.2 456.8,294.4 455.4,292.2 453.7,290.9 453.2,288.6 454.8,286.9 455.2,285.4 453.8,285.0 454.0,283.1 455.2,281.5 455.2,280.2 457.1,279.0 457.6,277.6 459.5,277.1 459.6,275.5 459.2,272.8 459.5,270.8 458.5,270.2 457.8,268.7 456.0,267.5 454.6,268.4 455.2,269.8 453.7,270.0 453.2,269.2 452.1,268.6 450.5,268.4 449.6,268.0 449.4,267.2 447.7,266.2 446.1,265.3 446.3,264.2 445.0,262.6 443.3,261.2 443.1,260.6 441.1,260.4 438.7,259.8 436.0,258.7 434.0,256.6 431.9,256.0 429.3,256.8 426.1,255.8 423.8,254.9 420.9,253.5 418.2,252.7 415.9,250.8 414.8,249.2 415.4,247.6 414.3,245.3 411.9,242.9 409.6,241.0 408.8,239.0 407.2,237.6 404.9,235.8 403.3,232.7 400.4,231.4 400.6,233.5 402.5,235.8 404.1,238.2 406.0,240.6 407.2,242.9 408.8,245.0 408.0,245.4 407.1,244.3 404.9,242.6 404.5,240.6 401.7,239.0 401.2,237.7 400.1,237.7 401.2,236.2 398.9,234.0 397.3,231.1 396.7,230.2 396.5,229.2 394.8,228.3 393.5,227.7 391.3,227.2 390.7,225.1 389.3,223.9 388.3,222.0 387.5,220.9 386.3,219.3 385.5,217.9 385.8,215.4 385.2,213.8 386.0,210.6 386.0,208.6 384.9,205.5 387.9,205.8 388.5,207.0 388.3,205.1 387.5,204.3 386.7,203.6 384.7,202.8 382.0,201.5 380.5,200.4 379.7,198.8 378.1,197.3 376.2,195.7 375.7,194.9 374.2,194.1 371.0,191.8 367.9,189.7 366.3,189.9 364.2,189.2 361.1,187.7 358.4,187.0 354.5,187.0 351.3,185.8 348.2,185.8 347.4,187.0 345.0,187.8 342.2,188.1 343.5,186.2 345.0,185.1 341.9,185.8 339.5,187.8 338.4,188.9 335.6,191.0 332.4,192.2 328.5,194.1 325.3,194.9 321.7,195.7 324.6,194.4 327.7,193.3 331.6,191.0 333.2,189.1 330.9,189.2 328.5,188.9 326.1,189.1 326.1,187.0 322.2,186.2 320.6,184.7 319.8,183.4 321.7,182.6 322.2,182.0 326.1,181.5 327.7,179.9 324.6,179.9 319.8,179.8Z" fill="none" stroke-width="1.5"/>
<g clip-path="url(#cEu)">
<rect x="540" y="125" width="370" height="333" fill="#5aab5c" stroke="none"/>
<path d="M598.8,188.8 599.8,187.3 600.9,185.5 600.4,184.2 600.4,182.3 602.9,180.4 604.0,178.4 605.6,176.8 607.2,174.7 609.9,173.6 612.7,173.6 613.6,172.7 615.1,172.4 618.2,173.3 621.3,172.9 622.1,171.8 625.0,171.1 626.9,172.7 627.3,172.1 629.9,171.9 630.8,170.5 630.0,168.1 587.5,168.1 585.9,191.0 597.7,190.3Z" fill="#5aab5c"/>
<path d="M598.8,188.8 599.8,187.3 600.9,185.5 600.4,184.2 600.4,182.3 602.9,180.4 604.0,178.4 605.6,176.8 607.2,174.7 609.9,173.6 612.7,173.6 613.6,172.7 618.5,174.6 618.2,175.7 619.3,177.9 615.8,180.7 612.7,186.2 612.7,193.3 603.2,195.1 600.1,194.1 598.2,189.4Z" fill="#5aab5c"/>
<path d="M613.6,172.7 615.1,172.4 618.2,173.3 621.3,172.9 622.1,171.8 625.0,171.1 626.9,172.7 626.1,174.1 628.4,174.9 626.9,176.2 628.6,178.1 628.0,179.5 629.2,180.6 628.4,181.5 630.8,182.5 627.6,185.0 625.0,186.2 622.1,187.0 615.8,187.8 612.7,187.0 613.5,181.5 619.3,177.9 618.2,175.7 618.5,174.6Z" fill="#5aab5c"/>
<path d="M592.5,197.6 592.2,198.7 590.6,199.8 590.8,201.5 591.1,202.3 590.8,202.8 591.3,203.6 594.1,204.3 593.2,206.6 596.3,206.7 597.7,206.9 601.7,206.7 601.4,205.6 602.9,204.7 600.4,202.3 603.7,201.2 604.8,201.2 604.3,199.5 603.6,198.1 603.7,196.6 603.2,195.5 596.8,195.1 594.6,194.9 592.2,196.2Z" fill="#2a6e2a"/>
<path d="M593.0,195.1 596.8,195.1 598.5,194.9 598.5,190.2 593.0,190.2Z" fill="#5aab5c"/>
<path d="M586.4,200.7 587.8,200.6 589.1,200.4 590.3,201.0 590.8,201.5 590.6,199.8 592.2,198.7 592.5,197.6 592.2,196.5 587.5,197.3 585.9,199.6Z" fill="#3a8e3c"/>
<path d="M585.1,201.0 586.4,200.7 587.8,200.6 589.1,200.4 590.3,201.0 590.8,201.5 591.1,202.3 590.8,202.8 590.3,203.6 588.8,202.8 587.8,202.9 585.6,201.7Z" fill="#5aab5c"/>
<path d="M578.4,213.3 580.1,214.0 582.3,214.3 584.0,214.7 586.2,214.7 586.7,215.4 593.8,214.6 593.0,212.5 593.3,211.9 592.1,211.4 592.2,209.9 591.9,209.2 591.9,209.1 590.8,208.6 592.1,206.9 593.2,206.6 594.1,204.3 591.3,203.6 590.3,203.6 588.8,202.8 587.8,202.9 585.6,201.7 585.1,201.0 583.6,200.4 571.8,204.3 576.5,213.3Z" fill="#3a8e3c"/>
<path d="M566.2,211.4 578.4,213.3 580.1,214.0 582.3,214.3 584.0,214.7 586.2,214.7 587.5,215.4 582.8,224.8 569.4,225.1 569.5,222.9 569.4,222.3 570.2,221.4 569.7,219.3 570.3,218.5 570.3,216.9 571.4,216.0 570.8,215.4 568.3,215.5 567.2,215.5Z" fill="#3a8e3c"/>
<path d="M567.2,215.5 568.3,215.5 570.8,215.4 571.4,216.0 570.3,216.9 570.3,218.5 569.7,219.3 570.2,221.4 569.4,222.3 569.5,222.9 569.5,224.0 565.5,224.0 565.5,215.4Z" fill="#5aab5c"/>
<path d="M593.0,212.5 593.3,211.9 592.1,211.4 592.2,209.9 591.9,209.2 593.6,209.1 594.6,208.6 595.8,208.4 597.7,207.7 600.4,207.5 600.7,208.0 602.8,208.3 602.6,209.4 602.9,209.7 602.5,210.6 611.1,217.7 608.0,222.5 600.1,224.8 593.8,213.8Z" fill="#3a8e3c"/>
<path d="M590.8,208.6 591.9,209.1 591.9,209.2 593.6,209.1 594.6,208.6 595.8,208.4 597.7,207.7 596.3,206.7 593.2,206.6 592.1,206.9Z" fill="#3a8e3c"/>
<path d="M596.3,206.7 597.7,207.7 600.4,207.5 600.7,208.0 602.8,208.3 606.4,208.0 607.2,206.7 608.1,205.9 607.8,205.0 604.8,204.3 602.9,204.7 601.4,205.6 601.7,206.7 597.7,206.9Z" fill="#5aab5c"/>
<path d="M600.4,202.3 602.9,204.7 604.8,204.3 607.8,205.0 610.8,203.6 608.8,202.3 606.7,202.0 604.8,201.2 603.7,201.2Z" fill="#5aab5c"/>
<path d="M603.7,196.6 603.6,198.1 604.3,199.5 604.8,201.2 606.7,202.0 608.8,202.3 610.8,203.6 612.7,204.0 616.6,204.2 619.0,202.0 618.4,200.4 618.2,198.8 618.8,196.6 618.2,196.0 617.1,195.8 612.1,195.8 609.5,194.6 603.2,195.5Z" fill="#5aab5c"/>
<path d="M607.8,205.0 608.1,205.9 610.8,206.2 612.7,205.6 616.2,205.3 616.6,204.2 612.7,204.0 610.8,203.6Z" fill="#9bd29b"/>
<path d="M607.2,206.7 606.4,208.0 607.2,208.4 608.8,209.2 610.8,209.2 613.2,208.9 614.6,208.4 617.3,206.1 616.2,205.3 612.7,205.6 610.8,206.2 608.1,205.9Z" fill="#9bd29b"/>
<path d="M602.8,208.3 606.4,208.0 607.2,208.4 605.8,209.4 605.1,210.0 602.5,210.0Z" fill="#9bd29b"/>
<path d="M602.5,209.9 605.1,210.0 605.8,209.4 607.2,208.4 608.8,209.2 610.8,209.2 611.3,210.3 611.1,210.8 607.7,210.3 606.1,210.3 606.1,211.1 608.9,213.8 610.3,214.7 608.0,214.9 603.2,212.2 602.1,210.6Z" fill="#9bd29b"/>
<path d="M606.1,210.3 607.7,210.3 611.1,210.8 611.7,211.9 611.4,213.0 610.3,214.4 608.9,213.8 606.1,211.1Z" fill="#c8e6c5"/>
<path d="M610.8,209.2 613.2,208.9 614.9,210.3 616.8,211.4 616.5,213.0 617.4,213.8 616.5,214.9 615.2,215.1 613.6,215.5 612.8,214.4 611.4,213.0 611.7,211.9 611.1,210.8 611.3,210.3Z" fill="#5aab5c"/>
<path d="M610.3,214.9 610.3,214.4 611.4,213.0 612.8,214.4 611.7,215.5 611.1,216.2Z" fill="#c8e6c5"/>
<path d="M611.7,215.5 612.8,214.4 613.6,215.5 613.9,217.1 613.5,219.0 611.1,219.0 611.1,215.5Z" fill="#c8e6c5"/>
<path d="M613.6,215.5 615.2,215.1 616.5,214.9 617.4,216.3 615.7,216.8 613.9,217.1Z" fill="#c8e6c5"/>
<path d="M613.5,219.0 613.9,217.1 615.7,216.8 617.4,216.3 619.8,216.2 622.1,215.8 622.9,216.5 622.1,217.4 623.7,226.4 611.9,226.4 611.9,219.0Z" fill="#5aab5c"/>
<path d="M616.5,213.0 616.8,211.9 617.4,212.5 621.3,212.7 623.7,212.1 626.2,212.7 626.9,215.4 624.2,215.2 622.9,215.5 622.1,215.8 619.8,216.2 617.4,216.3 616.5,214.9 617.4,213.8Z" fill="#9bd29b"/>
<path d="M613.2,208.9 614.6,208.4 617.3,206.1 620.4,206.4 623.1,205.5 625.4,207.7 625.6,209.9 628.0,210.2 628.4,212.2 626.2,212.7 623.7,212.1 621.3,212.7 617.4,212.5 616.8,211.4 614.9,210.3Z" fill="#9bd29b"/>
<path d="M623.1,205.5 625.0,205.1 627.2,205.9 628.4,208.4 626.7,208.4 625.6,209.9 625.4,207.7Z" fill="#f1f7ef"/>
<path d="M616.2,205.3 617.3,206.1 620.4,206.4 623.1,205.5 625.0,205.1 627.2,205.9 628.4,208.4 626.7,208.4 625.6,209.9 628.0,210.2 628.4,211.4 633.2,212.2 638.8,210.8 638.8,209.9 636.3,209.1 641.3,207.3 643.9,206.2 644.2,203.6 641.0,202.8 637.1,202.1 635.0,200.9 635.2,199.3 631.6,199.3 629.4,200.7 624.5,200.3 618.4,200.4 619.0,202.0 616.6,204.2Z" fill="#9bd29b"/>
<path d="M618.2,198.8 618.4,200.4 624.5,200.3 629.4,200.7 631.6,199.3 630.8,197.7 632.7,197.3 629.7,195.2 629.9,194.0 625.6,193.2 623.1,193.8 621.3,196.0 618.8,196.6Z" fill="#c8e6c5"/>
<path d="M614.3,194.4 614.3,193.0 615.8,192.7 620.4,192.7 623.1,193.8 621.3,196.0 618.8,196.6 618.2,196.0 617.1,195.8 617.1,194.9 614.7,194.6Z" fill="#9bd29b"/>
<path d="M614.3,193.0 613.9,190.5 619.6,190.3 621.0,190.2 624.3,191.0 625.6,193.2 623.1,193.8 620.4,192.7 615.8,192.7Z" fill="#c8e6c5"/>
<path d="M619.6,190.3 621.0,190.2 624.3,191.0 624.7,189.4 625.6,188.0 625.3,187.0 617.4,187.7 617.7,190.2Z" fill="#9bd29b"/>
<path d="M622.1,215.8 622.9,216.5 622.1,217.4 621.3,218.5 622.1,225.0 637.9,225.1 639.0,223.6 641.0,223.6 645.0,223.2 647.8,222.9 651.0,223.2 651.7,222.9 651.3,221.2 650.5,219.5 651.7,219.0 649.8,218.2 649.7,216.8 648.1,216.2 646.5,216.2 646.5,214.6 625.3,214.6 625.3,215.4 624.2,215.2 622.9,215.5Z" fill="#5aab5c"/>
<path d="M644.2,212.9 646.5,216.2 648.1,216.2 649.7,216.8 652.1,216.5 654.4,216.8 654.1,215.5 652.8,214.6 650.5,214.3 648.1,213.5 644.2,213.2Z" fill="#c8e6c5"/>
<path d="M649.7,216.8 649.8,218.2 651.7,219.0 654.4,220.3 654.4,219.3 652.8,217.4 652.1,216.5Z" fill="#c8e6c5"/>
<path d="M652.1,216.5 652.8,217.4 654.4,219.3 654.4,220.3 656.8,219.3 658.2,221.0 660.7,218.0 657.9,215.7 656.5,216.6 654.4,216.8Z" fill="#9bd29b"/>
<path d="M637.4,225.1 639.0,223.6 641.0,223.6 645.0,223.2 647.8,222.9 646.1,226.7 645.8,227.3 642.3,228.9 639.1,230.6 637.4,230.0 637.6,229.1 638.5,228.0 637.9,227.0 637.1,226.4Z" fill="#c8e6c5"/>
<path d="M636.5,229.4 637.6,229.1 638.5,228.0 637.9,227.0 637.4,226.9 636.0,228.8Z" fill="#9bd29b"/>
<path d="M635.0,232.2 636.2,235.1 636.9,232.7 637.3,230.0 637.4,229.1 636.5,229.4 635.2,230.8Z" fill="#5aab5c"/>
<path d="M631.6,231.7 635.0,232.2 636.2,235.1 635.4,238.2 632.2,234.4Z" fill="#5aab5c"/>
<path d="M636.2,235.1 637.9,235.5 640.2,234.3 639.5,231.9 642.6,231.1 642.9,230.6 642.3,228.9 639.1,230.6 637.3,230.0 636.9,232.7Z" fill="#9bd29b"/>
<path d="M647.8,222.9 651.0,223.2 651.7,222.9 652.7,224.8 653.9,226.2 653.0,228.0 654.1,229.5 656.3,231.1 656.5,232.8 657.7,234.4 656.6,234.3 656.3,234.1 654.4,235.7 651.6,235.5 647.3,232.5 644.8,231.3 642.9,230.6 642.3,228.9 645.8,227.3 646.1,226.7Z" fill="#9bd29b"/>
<path d="M654.4,235.7 656.3,234.1 657.6,234.4 658.0,236.6 656.0,236.6Z" fill="#9bd29b"/>
<path d="M636.2,235.1 637.9,235.5 640.2,234.3 639.5,231.9 642.6,231.1 642.9,230.6 644.8,231.3 647.3,232.5 651.6,235.5 654.4,235.7 656.0,236.6 658.0,236.6 661.2,242.5 661.8,242.8 662.4,243.6 664.0,245.4 668.1,245.8 668.9,246.9 667.8,250.0 663.1,251.6 658.4,252.2 657.1,252.8 655.2,254.7 652.4,254.1 649.7,254.1 649.2,255.4 648.4,255.7 644.2,257.9 633.2,237.4Z" fill="#5aab5c"/>
<path d="M648.4,255.7 649.2,255.4 649.7,254.1 652.4,254.1 655.2,254.7 657.1,252.8 658.4,252.2 663.1,251.6 664.8,255.4 666.2,262.6 648.9,262.6 647.3,256.3Z" fill="#c8e6c5"/>
<path d="M663.1,251.6 667.8,250.0 668.9,246.9 668.1,245.8 669.1,243.4 669.8,242.3 670.0,242.3 670.0,243.7 676.5,245.3 672.5,256.3 664.8,255.4Z" fill="#c8e6c5"/>
<path d="M662.4,243.6 664.0,245.4 668.1,245.8 669.1,243.4 669.8,242.3 670.2,242.3 670.3,239.6 667.8,240.6 662.4,242.8Z" fill="#5aab5c"/>
<path d="M661.2,242.5 661.8,242.8 662.4,242.8 663.1,240.1 661.5,239.8Z" fill="#9bd29b"/>
<path d="M651.7,219.0 650.5,219.5 651.3,221.2 651.7,222.9 652.7,224.8 653.9,226.2 653.0,228.0 654.1,229.5 656.3,231.1 656.5,232.8 657.7,234.4 659.9,240.6 670.9,242.9 678.2,242.0 678.5,240.1 680.7,239.3 680.9,238.7 680.1,236.9 677.1,234.6 678.5,233.0 678.3,232.1 676.9,231.9 676.5,229.5 677.2,228.0 677.6,225.4 677.4,223.9 674.6,222.5 671.4,221.4 669.8,221.5 667.5,222.6 666.1,222.8 666.1,224.0 658.4,223.2 658.2,221.0 656.8,219.3 654.4,220.3Z" fill="#5aab5c"/>
<path d="M658.4,208.3 654.4,205.3 655.7,202.3 657.9,201.8 661.2,200.1 665.4,200.7 667.8,201.7 671.7,201.2 673.6,201.0 678.0,201.5 677.7,199.9 676.0,198.8 677.2,196.6 683.5,195.7 689.8,194.3 693.0,196.2 696.9,196.5 701.6,196.2 702.4,197.6 707.2,201.5 712.7,201.2 715.8,203.4 718.7,204.0 716.1,207.3 711.9,207.2 710.8,209.9 707.6,210.6 707.5,214.1 707.5,215.1 705.6,214.1 700.9,213.8 697.7,213.5 696.9,214.6 693.0,214.4 692.2,215.1 689.8,216.3 688.3,216.9 685.9,215.5 685.3,213.8 683.4,212.7 677.2,211.7 673.3,209.7 669.4,210.6 668.6,216.5 666.2,214.9 663.9,215.8 659.9,212.2Z" fill="#c8e6c5"/>
<path d="M664.5,218.5 663.9,215.8 666.2,214.9 668.6,216.5 670.9,216.5 673.3,214.3 675.7,215.1 675.8,216.3 678.7,216.6 679.4,218.5 682.8,220.3 685.9,221.7 685.9,222.8 684.5,222.8 682.8,224.3 680.1,225.9 677.6,225.4 677.4,223.9 674.6,222.5 671.4,221.4 669.8,221.5 667.5,222.6 666.1,222.8 664.6,221.7Z" fill="#f1f7ef"/>
<path d="M669.4,210.6 673.3,209.7 677.2,211.7 683.4,212.7 685.3,213.8 685.9,215.5 688.3,216.9 691.4,215.1 693.0,215.2 693.8,216.5 696.1,217.3 694.2,218.2 692.2,218.2 689.8,218.2 689.1,219.3 687.5,219.6 688.7,221.4 688.0,222.9 685.9,222.8 685.9,221.7 682.8,220.3 679.4,218.5 678.7,216.6 675.8,216.3 675.7,215.1 673.3,214.3 670.9,216.5 668.6,216.5Z" fill="#c8e6c5"/>
<path d="M692.2,215.1 693.0,214.4 696.9,214.6 697.7,213.5 700.9,213.8 705.6,214.1 707.5,215.1 704.0,216.9 701.6,217.7 697.7,218.4 697.2,219.3 693.8,219.3 690.6,219.1 692.2,218.2 694.2,218.2 696.1,217.3 693.8,216.5 693.0,215.2Z" fill="#c8e6c5"/>
<path d="M688.0,222.9 688.7,221.4 687.5,219.6 689.1,219.3 689.8,218.2 692.2,218.2 690.6,219.1 693.8,219.3 697.2,219.3 699.3,220.9 699.1,222.8 696.9,222.6 694.1,223.7 693.5,221.7 691.9,221.4 690.6,222.9 688.3,223.2Z" fill="#c8e6c5"/>
<path d="M677.6,225.4 680.1,225.9 682.8,224.3 684.5,222.8 685.9,222.8 688.0,222.9 688.3,223.2 690.6,222.9 691.9,221.4 693.5,221.7 694.1,223.7 696.9,222.6 699.1,222.8 698.5,223.2 694.6,223.9 693.3,224.8 693.8,226.5 692.2,228.0 691.3,229.4 690.3,231.3 686.7,232.2 685.6,234.4 679.6,235.2 677.1,234.6 678.5,233.0 678.3,232.1 676.9,231.9 676.5,229.5 677.2,228.0Z" fill="#f1f7ef"/>
<path d="M678.2,242.0 678.5,240.1 680.7,239.3 680.9,238.7 680.1,236.9 677.1,234.6 679.6,235.2 685.6,234.4 686.7,232.2 690.3,231.3 691.3,229.4 692.2,228.0 693.8,226.5 693.3,224.8 694.6,223.9 698.5,223.2 700.1,223.7 703.7,225.6 697.7,226.9 697.7,229.5 699.8,230.6 698.5,232.7 697.6,234.3 695.4,236.2 694.4,237.6 691.9,237.7 690.6,239.3 691.7,241.0 693.0,243.1 689.5,243.2 688.6,244.2 685.1,245.3Z" fill="#5aab5c"/>
<path d="M688.6,244.2 689.5,243.2 693.0,243.1 691.7,241.0 690.6,239.3 691.9,237.7 694.4,237.6 695.4,236.2 697.6,234.3 698.5,232.7 699.8,230.6 697.7,229.5 697.7,226.9 703.7,225.6 704.8,227.2 705.6,229.5 705.3,232.4 708.7,234.0 707.3,236.2 719.9,239.9 719.9,237.6 721.0,237.4 721.3,239.3 726.1,239.3 726.2,237.7 729.2,235.5 732.4,235.2 734.4,237.1 732.7,238.5 731.1,239.5 730.1,241.8 728.3,243.7 728.1,245.3 727.0,247.0 727.0,248.4 715.0,273.6 694.6,273.6 685.1,250.0Z" fill="#5aab5c"/>
<path d="M707.3,236.2 708.7,234.0 710.6,234.1 713.8,236.0 716.6,237.4 719.9,237.6 719.9,239.9 716.3,239.6 712.7,238.4Z" fill="#9bd29b"/>
<path d="M721.3,239.3 721.0,237.4 722.6,237.1 725.3,237.4 726.2,237.7 726.1,239.3Z" fill="#c8e6c5"/>
<path d="M721.3,247.6 721.0,245.6 720.1,243.1 720.1,240.9 721.3,240.1 722.6,241.7 726.7,242.0 726.4,243.2 724.8,243.6 725.0,245.0 725.9,244.8 727.0,247.0 726.5,248.9 722.9,250.0Z" fill="#9bd29b"/>
<path d="M726.5,248.9 727.0,247.0 728.1,245.3 728.3,243.7 730.1,241.8 731.1,239.5 732.7,238.5 734.4,237.1 735.8,238.0 736.6,240.7 734.9,243.4 736.9,245.0 737.5,246.7 740.4,247.5 738.8,249.5 735.5,250.5 734.6,252.4 736.4,256.0 735.8,257.9 737.4,261.0 738.0,262.9 736.6,265.4 733.9,267.3 727.6,259.5 725.3,250.0Z" fill="#f1f7ef"/>
<path d="M736.6,265.4 738.0,262.9 737.4,261.0 735.8,257.9 736.4,256.0 734.6,252.4 735.5,250.5 738.8,249.5 739.4,250.8 740.5,250.8 740.4,253.9 742.0,252.8 744.9,252.7 746.1,254.1 746.2,255.8 747.5,256.9 747.3,258.8 743.4,259.0 742.4,260.2 743.2,263.1 742.6,265.0 739.4,265.0 740.2,267.3 743.4,271.3 742.1,271.7 740.4,272.5 739.0,271.3 734.7,271.3 734.7,265.4Z" fill="#9bd29b"/>
<path d="M738.8,249.5 740.4,247.5 741.5,248.1 742.1,246.2 743.4,247.6 745.7,249.2 744.9,250.8 746.8,252.4 748.9,254.7 750.5,257.1 750.5,258.4 748.1,258.8 747.3,258.8 747.5,256.9 746.2,255.8 746.1,254.1 744.9,252.7 742.0,252.8 740.4,253.9 740.5,250.8 739.4,250.8Z" fill="#c8e6c5"/>
<path d="M742.4,260.2 743.4,259.0 747.3,258.8 748.1,258.8 750.5,258.4 750.6,260.2 750.5,262.1 748.1,263.1 747.8,264.2 745.7,265.1 743.4,265.8 743.2,263.1Z" fill="#c8e6c5"/>
<path d="M742.1,246.2 743.4,245.8 746.2,245.3 747.2,244.8 749.2,245.6 751.2,247.6 754.4,248.4 754.4,268.9 745.7,268.9 745.7,265.1 747.8,264.2 748.1,263.1 750.5,262.1 750.6,260.2 750.5,258.4 750.5,257.1 748.9,254.7 746.8,252.4 744.9,250.8 745.7,249.2 743.4,247.6Z" fill="#9bd29b"/>
<path d="M739.0,271.3 740.4,272.5 742.1,271.7 744.2,272.8 746.5,279.9 743.4,280.2 737.9,276.8Z" fill="#74c476"/>
<path d="M777.1,218.5 779.6,216.9 781.0,215.8 782.7,216.3 783.1,215.4 785.6,214.0 787.0,214.9 787.5,216.9 784.3,221.7 783.2,220.7 781.5,221.2 780.7,221.8 779.9,222.1 776.4,222.5 776.4,218.5Z" fill="#f1f7ef"/>
<path d="M779.9,222.1 780.7,221.8 781.5,221.2 783.2,220.7 785.9,221.7 785.9,228.0 778.8,228.0 778.8,222.1Z" fill="#5aab5c"/>
<path d="M719.4,204.0 722.4,202.9 726.5,201.5 730.0,202.6 735.2,202.9 736.0,202.0 736.9,199.5 742.1,200.7 742.3,201.8 748.9,202.3 752.0,203.6 755.5,204.0 759.1,203.1 762.0,202.5 764.9,203.1 763.8,204.7 763.5,206.1 766.2,206.4 767.8,207.5 769.8,208.0 766.2,208.3 763.8,209.5 761.5,210.0 759.9,211.0 757.2,210.6 756.8,211.9 757.4,212.7 755.2,214.1 750.5,214.7 746.5,216.0 741.5,214.6 737.9,214.4 733.0,214.3 731.4,211.9 728.4,210.6 724.3,210.3 723.7,207.0 721.0,205.8Z" fill="#c8e6c5"/>
<path d="M697.2,219.3 697.7,218.4 701.6,217.7 704.0,216.9 707.5,215.1 707.5,214.1 707.6,210.6 710.8,209.9 711.9,207.2 716.1,207.3 718.7,204.0 719.4,204.0 721.0,205.8 723.7,207.0 724.3,210.3 728.4,210.6 731.4,211.9 733.0,214.3 737.9,214.4 741.5,214.6 746.5,216.0 750.5,214.7 755.2,214.1 757.4,212.7 756.8,211.9 757.2,210.6 759.9,211.0 761.5,210.0 763.8,209.5 766.2,208.3 769.8,208.0 767.8,207.5 766.2,206.4 763.5,206.1 763.8,204.7 764.9,203.1 766.7,203.6 768.9,202.5 770.1,200.4 770.9,198.7 771.7,197.6 775.7,197.3 778.8,198.1 780.4,199.6 781.9,202.3 785.1,203.7 787.1,204.5 787.5,206.4 790.0,206.4 793.3,205.3 792.2,207.0 790.9,209.9 788.7,210.3 787.5,211.0 787.9,213.0 787.0,214.9 785.6,214.0 783.1,215.4 782.7,216.3 781.0,215.8 779.6,216.9 777.1,218.5 778.0,250.0 751.2,253.2 751.2,247.6 749.2,245.6 747.2,244.8 746.2,245.3 743.4,245.8 742.1,246.2 741.5,248.1 740.4,247.5 737.5,246.7 736.9,245.0 734.9,243.4 736.6,240.7 735.8,238.0 734.4,237.1 732.4,235.2 729.2,235.5 726.2,237.7 725.3,237.4 722.6,237.1 721.0,237.4 719.9,237.6 716.6,237.4 713.8,236.0 710.6,234.1 708.7,234.0 705.3,232.4 705.6,229.5 704.8,227.2 703.7,225.6 700.1,223.7 698.5,223.2 699.1,222.8 699.3,220.9Z" fill="#1b5a1c"/>
</g>
<path d="M621.8,169.6 625.3,169.7 630.0,170.8 628.4,171.8 631.6,171.6 633.9,172.4 637.9,172.5 641.0,174.0 645.8,175.7 645.8,176.8 644.2,177.3 641.0,177.4 636.3,176.8 633.2,176.5 636.0,179.9 639.5,180.9 641.0,180.3 640.2,179.2 644.2,179.8 645.0,178.4 647.3,177.0 650.5,177.3 650.8,174.7 650.2,173.6 653.6,174.1 654.4,176.2 656.8,175.1 664.6,173.6 666.2,174.1 670.9,173.5 674.1,173.0 676.5,171.6 676.8,173.5 682.8,172.5 686.4,172.4 686.2,169.7 689.1,166.9 690.6,166.6 695.4,166.9 695.8,169.4 694.6,173.2 696.9,176.3 698.0,174.4 698.5,171.3 696.1,168.9 699.0,166.9 704.0,167.7 707.9,165.8 707.9,167.8 711.9,170.5 712.7,168.5 710.3,165.9 713.5,165.5 718.2,163.3 722.9,162.5 730.8,161.7 738.7,161.1 745.4,159.2 749.7,160.6 757.5,161.1 759.9,162.2 752.8,165.0 756.0,165.5 759.1,165.8 767.0,165.8 774.9,166.6 780.4,165.8 784.3,166.9 785.1,169.7 789.0,168.9 793.8,168.9 798.5,168.9 801.6,167.3 803.2,166.9 811.1,167.7 817.4,168.9 820.5,169.9 828.4,169.7 833.1,171.3 833.9,171.9 841.0,172.1 845.7,171.4 849.7,171.4 850.4,172.9 856.7,171.6 861.5,172.2 864.6,173.0 864.6,179.0 862.2,180.3 860.7,179.6 859.1,179.5 862.2,181.5 863.5,183.1 859.9,183.4 855.2,184.2 852.0,185.5 849.7,187.0 845.7,186.6 842.6,187.3 838.6,187.2 838.3,188.6 836.3,189.7 837.8,190.5 838.2,193.0 836.3,194.9 836.3,195.4 833.1,196.5 833.1,197.7 830.8,198.1 830.4,199.6 827.9,201.2 826.8,198.1 826.3,194.9 826.0,192.1 828.1,190.7 830.8,189.4 835.5,186.7 838.6,184.7 838.3,183.1 833.1,184.2 832.8,185.3 828.4,184.5 824.5,187.3 825.2,188.3 820.5,188.8 818.9,188.4 815.8,187.7 810.3,188.0 805.6,188.3 801.6,190.5 798.5,192.5 794.5,195.2 796.9,196.5 797.7,197.1 800.1,196.2 803.2,197.7 803.8,199.3 802.4,201.2 802.4,202.8 802.3,205.1 800.1,207.2 798.5,209.1 796.1,211.0 794.2,212.9 790.6,214.3 789.0,213.5 787.0,214.9 785.4,216.2 785.4,217.3 781.9,219.0 781.9,219.8 783.2,220.7 784.9,223.2 785.1,225.1 784.3,226.2 782.4,226.9 780.4,227.5 780.1,225.6 780.7,223.2 779.9,222.1 778.0,222.0 778.5,220.6 778.0,219.1 777.1,218.7 774.1,219.3 772.5,220.3 772.0,219.3 773.3,217.6 771.7,217.1 769.4,218.7 767.0,219.8 766.5,220.9 768.3,221.8 768.6,222.9 771.2,222.0 774.1,222.6 773.9,223.4 771.2,224.3 769.0,226.2 770.5,227.5 771.4,229.9 773.0,231.4 773.1,232.8 771.7,233.8 773.3,234.4 772.7,236.6 771.2,237.7 769.7,240.6 768.6,241.8 767.0,243.1 765.4,244.5 763.8,245.4 761.2,246.4 759.9,246.5 757.2,247.5 755.0,248.0 754.7,249.5 753.9,247.6 752.0,247.3 751.2,247.6 749.4,248.8 748.1,250.8 747.6,251.9 748.9,253.5 750.5,255.5 751.7,256.3 752.8,258.7 753.3,261.0 753.1,262.9 752.0,264.2 750.0,265.1 749.2,266.5 746.8,267.8 746.2,266.1 745.7,265.1 744.2,265.0 743.4,263.7 742.6,262.6 741.0,261.5 740.1,261.5 740.1,260.4 738.7,260.4 738.5,262.3 737.4,265.0 737.5,266.9 739.1,268.4 739.4,270.2 741.0,270.8 742.1,271.7 743.7,273.6 744.2,275.2 744.0,277.1 745.3,279.3 744.2,279.5 742.6,278.2 740.7,276.9 739.8,275.2 739.1,272.8 739.0,271.3 738.2,270.5 736.0,268.9 736.0,267.3 736.4,265.3 736.6,262.9 736.3,261.0 735.2,257.9 734.9,255.5 733.8,254.7 731.6,256.6 729.7,256.3 730.0,253.9 729.7,251.9 728.4,250.3 727.3,249.2 726.5,248.8 725.7,246.4 724.2,245.8 722.9,247.0 721.3,247.2 720.1,247.3 718.2,247.8 717.9,249.1 716.6,250.2 715.0,251.1 713.5,252.7 710.8,255.2 709.2,256.0 707.6,257.1 707.3,260.2 707.0,262.6 707.0,265.3 705.9,265.4 705.6,266.9 704.3,267.5 703.2,268.7 701.6,267.3 700.9,265.0 699.8,262.6 699.0,261.0 698.2,258.2 696.9,256.3 696.1,253.2 695.8,251.3 695.7,248.8 695.5,247.2 694.9,248.4 693.0,248.8 691.4,248.3 689.8,246.4 691.9,245.4 690.2,245.4 689.4,244.8 688.6,244.2 687.3,243.7 686.2,242.3 685.9,241.5 682.8,241.8 679.6,241.8 678.2,242.0 675.7,241.7 673.8,241.2 671.4,241.0 670.9,239.3 669.8,238.8 667.3,239.6 664.6,239.0 662.3,237.6 661.2,236.0 660.4,234.3 658.4,233.6 657.7,234.4 656.8,234.4 656.8,235.4 657.4,236.6 658.4,238.2 659.9,239.5 660.2,241.2 661.2,242.5 661.8,240.6 662.4,240.9 662.3,242.8 663.9,243.4 666.2,243.6 668.3,241.7 669.5,240.4 670.0,240.1 670.0,242.3 670.9,243.7 673.5,244.3 675.4,246.1 674.6,247.8 673.3,249.4 672.2,251.7 670.2,253.2 668.3,253.9 667.5,254.7 664.8,255.4 663.4,256.9 660.7,257.9 658.4,259.1 656.0,260.1 652.8,260.9 652.1,261.3 649.7,261.5 649.2,260.6 648.6,258.2 648.6,255.7 647.3,253.9 646.1,251.9 644.2,249.5 642.8,248.0 642.6,246.1 641.8,244.0 639.9,242.3 639.8,241.4 638.7,240.1 637.1,237.9 636.0,237.3 636.2,235.1 635.4,237.4 635.0,237.9 633.9,236.9 633.2,235.8 632.5,234.4 632.1,232.2 635.0,232.2 636.2,230.3 636.5,229.2 637.3,227.5 637.7,225.6 638.2,223.9 637.1,223.9 635.5,223.7 634.3,224.5 632.4,224.7 629.4,223.6 627.6,224.5 625.6,223.7 624.2,223.2 624.0,221.8 622.6,221.2 623.4,220.1 622.5,219.3 622.5,218.2 622.1,217.3 620.6,217.1 619.5,217.4 619.0,218.2 618.7,218.7 617.9,218.2 616.9,217.7 616.8,218.5 617.4,219.6 617.9,220.4 619.0,221.4 619.0,222.1 618.2,221.8 617.7,222.6 617.7,224.0 616.6,224.0 616.2,223.2 615.4,223.6 614.6,222.0 615.1,221.2 614.3,220.9 613.9,220.1 613.0,219.1 611.7,217.7 611.7,216.0 611.4,215.5 610.3,214.6 608.8,213.8 606.4,213.0 605.1,211.9 604.7,210.6 603.7,210.2 602.8,210.5 602.6,210.8 602.6,209.7 602.0,209.5 600.7,210.0 600.6,211.0 600.7,211.9 602.6,213.0 603.6,214.7 605.1,215.5 606.7,215.7 606.4,216.3 608.3,217.1 610.3,218.4 610.0,218.8 608.3,217.9 607.3,219.0 608.1,220.1 607.2,221.0 606.4,221.8 605.9,221.4 606.4,220.4 605.9,218.5 604.5,217.6 603.4,217.3 602.5,216.6 600.6,215.8 598.8,214.7 597.7,214.0 597.3,212.4 596.2,211.7 595.1,211.6 594.1,212.2 593.0,212.5 591.6,213.6 589.7,213.3 588.8,213.2 587.5,213.0 586.2,213.5 585.9,214.6 586.2,215.5 584.7,216.5 582.8,216.9 582.0,217.7 580.7,219.3 581.4,220.4 580.4,221.2 580.1,222.3 578.4,222.9 577.7,223.7 574.3,223.7 572.9,224.7 571.8,224.5 571.1,223.6 569.9,222.9 568.6,223.2 567.2,223.2 567.3,221.0 566.4,220.6 566.7,219.3 567.3,217.7 567.3,215.7 567.2,214.6 566.6,213.8 568.6,212.7 570.2,212.9 572.5,212.9 575.2,213.0 578.4,213.2 579.2,211.4 579.3,209.5 579.3,208.8 577.7,207.3 576.8,206.7 574.3,206.2 573.8,205.3 575.7,204.7 578.1,205.0 578.7,205.0 578.5,203.2 579.3,203.7 581.4,203.6 583.6,202.6 583.7,201.4 585.3,201.0 586.7,200.6 587.5,199.6 588.6,198.2 589.7,197.6 592.1,197.4 592.5,196.9 594.6,197.1 594.7,196.0 594.7,195.1 594.0,194.1 594.1,192.2 594.7,191.6 596.9,190.8 597.9,190.7 597.6,192.5 598.2,192.9 597.3,193.6 596.6,194.6 596.3,195.2 596.9,195.8 598.5,196.5 600.4,196.2 602.5,195.8 603.6,196.6 606.4,196.0 610.0,195.2 610.6,195.8 612.1,195.8 612.7,195.1 614.3,194.4 614.3,192.1 615.1,191.0 616.8,190.7 617.7,191.8 619.5,191.4 619.6,189.7 618.2,189.1 618.0,188.3 620.6,187.8 625.3,187.8 628.7,187.2 626.1,186.2 622.1,186.4 617.4,187.2 614.7,185.8 615.1,183.1 614.4,182.3 616.6,181.0 619.8,179.5 621.2,179.0 619.3,177.9 616.3,178.1 614.7,179.5 613.8,181.0 611.1,182.0 609.2,183.1 608.4,184.7 608.3,186.1 610.5,186.9 611.0,187.7 609.2,188.9 607.5,190.0 607.2,191.8 606.4,193.0 604.3,193.2 603.6,194.3 601.7,194.3 601.2,193.0 599.9,191.0 598.8,188.8 597.9,188.1 596.2,188.8 594.1,190.0 592.2,190.2 590.2,189.1 589.4,187.3 589.1,185.5 589.4,183.9 591.4,182.6 594.6,181.5 596.9,180.4 599.3,179.2 600.9,177.6 602.5,176.0 604.0,174.7 606.1,173.6 608.8,172.4 611.1,171.4 615.1,171.0 618.2,170.0Z M626.9,216.6 630.8,216.6 633.6,215.4 636.6,215.4 638.7,216.5 641.8,217.1 644.5,216.9 646.5,216.2 646.9,215.1 645.8,213.8 643.4,212.7 641.3,211.6 639.9,211.0 639.0,210.3 640.2,209.9 641.5,208.8 642.9,207.3 641.3,207.3 639.1,207.8 636.8,208.4 636.3,209.5 638.7,210.2 637.1,210.6 635.0,211.4 633.9,211.3 632.4,210.0 634.1,209.1 631.6,208.8 630.5,208.1 629.5,208.6 628.0,210.2 627.8,210.8 626.4,211.9 626.2,213.0 625.1,214.1 625.3,215.4 625.6,216.2Z M654.9,211.1 656.0,209.5 658.4,208.3 661.5,207.7 664.6,207.8 664.6,210.2 662.0,210.3 661.5,211.4 660.4,211.6 662.3,213.5 663.9,214.6 663.9,216.2 665.9,216.6 664.5,218.5 665.8,219.8 666.1,222.5 665.9,223.4 663.1,223.9 660.4,222.8 658.4,222.3 658.2,221.0 658.7,219.6 659.1,218.0 660.4,218.0 659.1,217.6 657.9,215.7 656.0,213.8 656.0,212.5Z" fill="none" stroke-width="1.5"/>
<g clip-path="url(#cAf)">
<rect x="540" y="200" width="200" height="200" fill="#c8e6c5" stroke="none"/>
<path d="M560.7,237.9 567.5,237.9 567.5,236.3 573.3,234.3 575.5,233.5 575.7,231.9 579.3,230.8 578.5,228.8 577.7,226.2 578.1,224.0 571.8,224.0 559.2,235.8Z" fill="#c8e6c5"/>
<path d="M554.3,248.8 560.7,248.0 560.7,244.5 562.3,244.5 562.3,240.6 567.5,240.6 567.5,237.9 560.7,237.9 552.9,243.7Z" fill="#c8e6c5"/>
<path d="M554.3,248.8 560.7,248.0 560.7,244.5 562.3,244.5 562.3,240.6 567.5,240.6 567.5,238.5 573.6,242.1 571.0,242.1 572.5,255.5 572.5,257.1 566.2,257.3 563.1,256.9 562.0,258.2 558.4,255.4 555.2,256.3 552.9,253.2Z" fill="#f1f7ef"/>
<path d="M562.0,258.2 563.1,256.9 566.2,257.3 572.5,257.1 572.5,255.5 571.0,242.1 573.6,242.1 583.1,248.3 583.1,248.9 586.2,250.3 587.8,251.4 587.8,255.5 586.7,257.3 582.0,258.0 580.1,257.9 578.1,259.1 575.7,260.7 574.1,261.5 572.9,262.9 572.5,265.1 568.6,265.4 567.8,263.4 564.7,262.6 563.3,262.3 562.3,261.0Z" fill="#e2f1df"/>
<path d="M567.5,238.5 567.5,236.3 573.3,234.3 575.5,233.5 575.7,231.9 579.3,230.8 578.5,228.8 577.7,226.2 578.1,222.5 594.7,222.5 594.3,224.0 594.1,226.9 593.0,228.3 595.4,231.0 596.2,233.8 596.8,239.8 596.0,240.2 596.9,242.9 599.9,244.5 593.0,248.8 590.3,250.8 587.8,251.4 586.2,250.3 583.1,248.9 583.1,248.3 573.6,242.1Z" fill="#9bd29b"/>
<path d="M594.7,222.5 594.3,224.0 594.1,226.9 593.0,228.3 595.4,231.0 596.2,233.8 597.3,233.8 599.3,230.6 599.3,229.2 600.1,228.0 599.3,222.0Z" fill="#9bd29b"/>
<path d="M596.2,233.8 597.3,233.8 599.3,230.6 599.3,229.2 600.1,228.0 620.9,228.0 620.6,235.5 620.6,246.9 620.6,250.0 619.0,250.0 619.0,250.8 606.4,244.5 604.8,245.3 603.6,245.9 599.9,244.5 596.9,242.9 596.0,240.2 596.8,239.8Z" fill="#c8e6c5"/>
<path d="M620.9,228.0 620.6,235.5 620.6,246.9 640.2,246.9 640.2,243.7 636.3,235.1 632.1,231.7Z" fill="#5aab5c"/>
<path d="M619.0,250.0 620.6,250.0 620.6,246.9 640.2,246.9 642.6,253.2 639.5,254.7 638.7,259.0 638.2,261.5 636.3,262.8 634.9,264.7 634.9,268.1 633.2,269.2 636.0,271.3 636.8,273.0 637.7,274.3 634.7,274.9 633.9,275.5 630.0,275.8 629.7,275.8 627.6,274.4 625.3,274.6 624.3,273.5 622.9,272.1 620.9,269.7 619.3,268.1 618.4,267.3 617.3,264.2 615.8,261.5 616.6,259.5 619.0,256.8 619.0,250.8Z" fill="#c8e6c5"/>
<path d="M638.2,261.5 638.7,259.0 640.2,259.0 641.8,258.7 644.2,258.7 648.0,261.8 647.0,264.2 648.7,264.3 650.5,267.3 655.2,268.9 656.8,268.9 652.1,273.6 648.9,274.3 647.2,275.4 645.4,274.9 643.4,276.1 641.2,275.8 639.3,274.6 637.7,274.3 636.8,273.0 636.0,271.3 633.2,269.2 634.9,268.1 634.9,264.7 636.3,262.8Z" fill="#c8e6c5"/>
<path d="M638.7,259.0 639.5,254.7 642.0,252.7 644.2,255.5 649.5,261.3 648.0,261.8 644.2,258.7 641.8,258.7 640.2,259.0Z" fill="#f1f7ef"/>
<path d="M648.0,261.8 649.7,261.3 649.8,263.6 648.7,264.3 647.0,264.2Z" fill="#f1f7ef"/>
<path d="M645.8,284.3 645.8,277.1 647.2,275.4 648.9,274.3 652.1,273.6 656.8,268.9 655.2,268.9 650.5,267.3 648.7,264.3 649.4,263.2 663.1,261.8 663.1,267.3 647.3,286.2Z" fill="#f1f7ef"/>
<path d="M634.7,274.9 637.7,274.3 639.3,274.6 641.2,275.8 643.4,276.1 645.4,274.9 647.2,275.4 645.8,277.1 645.8,284.3 647.3,285.4 644.2,289.4 642.9,288.9 640.4,286.2 640.6,287.0 634.7,283.1 634.7,279.9 636.3,278.8 635.5,276.8Z" fill="#9bd29b"/>
<path d="M629.7,275.8 630.0,275.8 633.9,275.5 634.7,274.9 635.5,276.8 636.3,278.8 634.7,279.9 634.7,283.1 629.2,283.1 627.8,283.7 628.0,281.5 628.3,280.2 630.5,278.0Z" fill="#c8e6c5"/>
<path d="M629.2,283.1 634.7,283.1 640.6,287.0 640.4,286.2 642.9,288.9 645.8,292.5 645.4,297.9 641.8,299.4 638.7,299.9 636.2,299.8 635.2,296.8 633.2,296.3 630.0,295.0 629.2,294.1 627.6,291.7 627.6,288.6 629.2,287.0 629.7,285.3Z" fill="#c8e6c5"/>
<path d="M626.9,283.7 629.2,283.1 629.7,285.3 629.2,287.0 627.6,288.6 627.2,286.2 626.9,285.8Z" fill="#c8e6c5"/>
<path d="M600.1,290.9 600.9,289.4 602.5,289.1 604.0,289.2 605.3,288.3 606.7,285.0 608.0,283.1 609.2,282.3 609.5,280.7 609.7,277.7 610.5,276.0 611.9,273.5 616.6,275.0 619.8,273.5 621.0,273.6 624.3,273.5 625.3,274.6 627.6,274.4 629.7,275.8 630.5,278.0 628.3,280.2 628.0,281.5 627.8,283.7 626.9,285.8 627.2,286.2 627.6,288.6 627.6,291.7 629.2,294.1 626.7,294.9 626.1,296.0 626.4,298.3 625.9,300.2 628.1,300.7 628.1,302.6 626.1,301.5 624.0,299.8 621.0,299.1 619.6,299.4 618.8,298.7 616.3,299.1 615.5,296.5 615.7,294.1 613.5,292.7 611.9,292.5 611.7,294.1 608.9,294.3 607.3,292.5 607.3,290.8 602.0,290.8Z" fill="#c8e6c5"/>
<path d="M598.5,287.8 598.8,287.3 600.1,285.3 600.9,285.1 601.7,285.3 603.2,285.4 603.9,284.5 604.0,282.4 603.1,281.5 603.6,279.3 602.0,279.5 602.0,278.0 604.0,278.0 606.4,278.8 606.7,278.0 607.3,276.0 610.5,276.0 609.7,277.7 609.5,280.7 609.2,282.3 608.0,283.1 606.7,285.0 605.3,288.3 604.0,289.2 602.5,289.1 600.9,289.4 599.3,289.8Z" fill="#f1f7ef"/>
<path d="M593.8,283.1 596.2,279.9 599.0,279.9 599.0,278.0 602.0,278.0 602.0,279.5 603.6,279.3 603.1,281.5 604.0,282.4 603.9,284.5 603.2,285.4 601.7,285.3 600.9,285.1 600.1,285.3 598.8,287.3 598.5,287.8 595.4,286.2Z" fill="#e2f1df"/>
<path d="M595.4,279.9 599.0,279.9 599.0,278.0 596.6,277.9 595.4,278.4Z" fill="#f1f7ef"/>
<path d="M594.6,273.9 596.6,277.9 599.0,278.0 602.0,278.0 604.0,278.0 606.4,278.8 606.7,278.0 604.8,275.7 604.0,273.6 604.3,271.7 605.6,269.7 602.9,267.3 604.0,265.8 605.6,265.8 604.8,264.2 604.0,261.8 603.6,261.0 603.2,262.6 602.0,265.8 599.8,270.5 597.7,270.6 596.5,271.3 595.1,272.2Z" fill="#c8e6c5"/>
<path d="M604.0,273.6 604.8,275.7 606.7,278.0 607.3,276.0 610.5,276.0 611.9,273.5 616.6,275.0 619.8,273.5 621.0,273.6 624.3,273.5 622.9,272.1 620.9,269.7 619.3,268.1 618.4,267.3 617.3,264.2 615.1,265.3 611.1,267.3 609.5,268.9 607.2,269.2 605.6,269.7 604.3,271.7Z" fill="#f1f7ef"/>
<path d="M603.6,261.0 604.0,261.8 604.8,264.2 605.6,265.8 604.0,265.8 602.9,267.3 605.6,269.7 607.2,269.2 609.5,268.9 611.1,267.3 615.1,265.3 617.3,264.2 615.8,261.5 616.6,259.5 619.0,256.8 619.0,250.8 606.4,244.5 604.8,245.3 605.6,248.4 605.8,253.2 605.6,255.0 602.5,258.7 602.5,260.1Z" fill="#f1f7ef"/>
<path d="M582.0,258.0 586.7,257.3 587.8,255.5 587.8,251.4 590.3,250.8 593.0,248.8 599.9,244.5 603.6,245.9 604.8,245.3 605.6,248.4 605.8,253.2 605.6,255.0 602.5,258.7 602.5,260.1 600.9,260.9 597.7,260.6 595.4,261.3 592.2,261.0 589.9,259.8 587.5,260.2 586.9,263.1 585.6,262.1 584.7,262.0 584.5,262.8 582.8,260.6 581.5,259.5Z" fill="#f1f7ef"/>
<path d="M585.5,271.7 585.6,267.3 586.9,265.8 586.9,263.1 587.5,260.2 589.9,259.8 592.2,261.0 595.4,261.3 597.7,260.6 600.9,260.9 602.5,260.1 603.6,261.0 603.2,262.6 602.0,265.8 599.8,270.5 597.7,270.6 596.5,271.3 595.1,272.2 594.6,274.7 590.6,275.5 587.5,272.8Z" fill="#9bd29b"/>
<path d="M583.7,272.1 583.7,267.3 582.6,265.3 582.8,264.2 584.5,262.8 584.7,262.0 585.6,262.1 586.9,263.1 586.9,265.8 585.6,267.3 585.5,271.7Z" fill="#c8e6c5"/>
<path d="M583.1,272.2 582.1,270.8 582.1,268.1 581.5,266.5 581.2,264.2 582.8,264.2 582.6,265.3 583.7,267.3 583.7,272.1Z" fill="#c8e6c5"/>
<path d="M576.2,273.8 576.8,271.3 576.2,269.7 577.3,268.6 576.8,266.5 576.8,264.2 581.2,264.2 581.5,266.5 582.1,268.1 582.1,270.8 583.1,272.2 581.2,273.6 578.1,274.4Z" fill="#c8e6c5"/>
<path d="M572.5,265.1 572.9,262.9 574.1,261.5 575.7,260.7 578.1,259.1 580.1,257.9 582.0,258.0 581.5,259.5 582.8,260.6 584.5,262.8 582.8,264.2 581.2,264.2 576.8,264.2 576.8,266.5 574.1,266.2Z" fill="#e2f1df"/>
<path d="M569.2,274.7 569.4,272.8 567.8,271.3 568.1,269.5 568.6,268.1 568.6,265.4 572.5,265.1 574.1,266.2 576.8,266.5 577.3,268.6 576.2,269.7 576.8,271.3 576.2,273.8 573.3,274.4Z" fill="#e2f1df"/>
<path d="M563.1,270.6 564.7,268.4 566.2,268.3 568.1,269.5 567.8,271.3 569.4,272.8 569.2,274.7 567.0,274.4Z" fill="#f1f7ef"/>
<path d="M560.3,267.3 561.5,265.9 563.6,265.8 564.7,267.3 564.7,268.4 563.1,270.6 560.7,269.7Z" fill="#f1f7ef"/>
<path d="M557.6,264.3 558.4,263.4 559.6,263.1 559.6,261.7 563.3,262.3 564.7,262.6 567.8,263.4 568.6,265.4 568.6,268.1 568.1,269.5 566.2,268.3 564.7,268.4 564.7,267.3 563.6,265.8 561.5,265.9 560.3,267.3 559.2,266.5Z" fill="#f1f7ef"/>
<path d="M554.7,262.0 557.6,261.5 559.6,261.7 559.6,263.1 558.4,263.4 557.6,264.3 555.2,264.2Z" fill="#f1f7ef"/>
<path d="M553.2,258.4 555.2,256.3 558.4,255.4 562.0,258.2 562.3,261.0 563.3,262.3 559.6,261.7 557.6,261.5 554.7,262.0 553.6,261.0Z" fill="#c8e6c5"/>
<path d="M554.6,260.1 557.6,259.8 559.5,260.2 557.6,260.7 554.7,260.9Z" fill="#e9a21f"/>
<path d="M599.3,290.8 602.0,290.8 607.3,290.8 607.3,292.5 608.9,294.3 611.7,294.1 611.9,292.5 613.5,292.7 615.7,294.1 615.5,296.5 616.3,299.1 618.8,298.7 619.0,302.0 615.8,302.0 615.8,307.0 618.0,309.2 614.9,309.8 611.1,309.5 603.2,308.9 599.3,308.7 598.5,297.2Z" fill="#f1f7ef"/>
<path d="M615.8,302.0 619.0,302.0 618.8,298.7 619.6,299.4 621.0,299.1 624.0,299.8 626.1,301.5 628.1,302.6 628.1,300.7 625.9,300.2 626.4,298.3 626.1,296.0 626.7,294.9 629.2,294.1 630.0,295.0 633.2,296.3 633.6,298.5 633.5,301.2 632.8,302.9 628.7,304.8 629.1,306.1 626.7,306.5 623.7,309.7 621.0,309.5 618.0,309.2 615.8,307.0Z" fill="#c8e6c5"/>
<path d="M633.2,296.3 635.2,296.8 636.2,299.8 635.7,302.8 637.6,304.6 637.6,306.7 636.6,308.3 635.4,307.0 635.5,304.5 633.9,304.0 632.8,302.9 633.5,301.2 633.6,298.5Z" fill="#c8e6c5"/>
<path d="M645.4,297.9 641.8,299.4 638.7,299.9 636.2,299.8 635.7,302.8 637.6,304.6 637.6,306.7 636.6,308.3 635.4,307.0 635.5,304.5 633.9,304.0 632.8,302.9 628.7,304.8 629.1,306.1 632.4,307.2 633.2,309.8 632.7,313.8 630.5,316.8 631.6,320.1 631.6,323.9 633.9,324.8 647.3,313.0 647.3,297.2Z" fill="#c8e6c5"/>
<path d="M621.0,309.5 623.7,309.7 626.7,306.5 629.1,306.1 632.4,307.2 633.2,309.8 632.7,313.8 630.5,316.8 627.5,316.5 625.3,315.4 624.7,313.8 622.5,312.4Z" fill="#c8e6c5"/>
<path d="M612.7,316.1 612.7,320.5 613.8,323.7 615.4,323.7 617.1,321.5 621.3,322.0 623.4,319.8 625.3,317.4 627.5,316.5 625.3,315.4 624.7,313.8 622.5,312.4 621.0,309.5 618.0,309.2 614.9,309.8 614.3,310.3 614.3,316.1Z" fill="#c8e6c5"/>
<path d="M598.5,308.7 603.2,308.9 611.1,309.5 614.9,309.8 618.0,309.2 621.0,309.5 619.8,310.0 614.3,310.3 614.3,316.1 612.7,316.1 612.7,320.5 612.7,326.4 609.5,327.0 607.0,326.5 603.2,325.6Z" fill="#c8e6c5"/>
<path d="M607.0,326.5 609.5,327.0 612.7,326.4 612.7,320.5 613.8,323.7 615.4,323.7 617.1,321.5 621.3,322.0 623.4,319.8 625.3,317.4 627.5,316.5 630.5,316.8 631.6,320.1 631.6,323.9 633.9,324.8 634.7,338.2 606.4,338.2Z" fill="#5aab5c"/>
<path d="M623.7,328.1 625.6,326.7 627.5,327.9 626.9,329.2 625.3,329.8 624.2,329.2Z" fill="#c8e6c5"/>
<path d="M630.0,322.4 631.6,322.4 631.7,323.9 630.6,324.5 629.7,323.5Z" fill="#c8e6c5"/>
</g>
<path d="M632.5,234.4 632.1,232.2 630.0,231.9 628.1,232.5 624.5,232.4 620.9,231.7 617.7,230.3 615.1,229.7 612.8,230.6 612.7,232.7 611.6,233.8 608.8,232.8 605.6,231.7 605.3,230.6 601.7,229.7 599.3,229.2 597.3,228.3 598.2,227.0 598.2,225.4 598.4,223.4 597.3,222.8 595.4,222.9 592.2,223.2 589.1,223.6 585.9,223.4 582.8,224.2 579.6,225.4 577.7,226.2 576.5,225.9 573.8,226.1 572.7,225.0 571.8,225.3 570.5,228.0 567.8,229.1 566.2,231.4 565.8,233.5 565.8,235.1 563.6,236.5 560.7,237.7 558.8,239.9 557.6,242.5 556.0,244.5 554.4,248.0 555.2,250.0 555.7,251.6 555.2,255.5 553.6,258.4 554.7,260.2 554.9,262.0 556.3,263.4 557.7,264.8 559.6,266.4 560.4,267.8 562.0,269.7 563.3,270.8 566.2,273.0 569.2,274.6 572.5,273.6 576.2,273.5 578.1,274.1 581.2,272.7 583.1,272.1 585.5,271.6 588.0,271.6 589.4,273.0 590.6,274.7 593.0,274.6 594.6,274.3 595.4,275.4 596.5,276.5 596.6,277.9 596.2,279.9 595.7,281.5 595.1,282.8 596.2,284.6 597.7,286.5 599.6,288.6 600.4,290.6 601.4,292.5 602.1,295.0 602.9,298.3 602.5,301.2 600.9,303.2 600.1,305.6 599.8,308.6 600.9,311.1 602.9,314.6 604.0,317.4 604.2,320.1 605.0,323.4 607.0,326.5 608.3,328.7 609.9,331.6 609.9,333.3 610.2,335.2 611.6,336.0 612.7,336.3 616.2,335.2 618.2,335.0 621.3,335.0 624.5,333.8 626.1,332.5 628.4,330.3 630.0,328.4 631.6,326.7 632.8,324.0 633.0,322.3 634.7,320.5 636.9,319.0 637.1,316.1 636.3,313.8 636.0,312.7 637.9,311.1 639.5,309.4 643.1,307.5 645.1,305.1 645.1,302.0 645.0,298.5 643.9,296.9 643.4,294.1 643.1,292.2 642.3,290.9 642.9,288.9 643.7,287.5 645.0,285.4 646.5,284.2 648.6,281.8 651.3,279.5 653.9,277.7 656.5,274.7 658.4,271.6 659.6,268.7 661.2,265.8 661.8,265.0 662.0,262.9 659.9,263.4 657.6,263.9 654.4,264.5 651.3,265.1 649.4,263.6 649.2,262.8 649.4,261.8 648.1,260.6 646.1,258.5 644.2,256.9 643.1,256.5 642.8,254.7 641.8,253.2 640.2,251.9 639.9,249.2 639.5,247.2 638.7,246.1 637.3,243.9 636.3,242.1 635.0,239.8 634.1,237.7 633.0,236.2Z" fill="none" stroke-width="1.5"/>
<path d="M466.3,158.4 474.1,156.3 478.9,154.0 486.7,152.4 499.3,151.6 510.3,151.9 521.4,150.2 534.0,150.0 546.6,151.6 549.7,153.2 559.2,153.2 562.3,154.8 552.9,155.9 551.3,158.7 548.1,161.1 550.5,163.4 547.3,165.0 546.6,167.3 543.4,167.7 546.6,170.5 540.3,170.8 545.0,172.1 540.3,173.6 532.4,174.4 527.7,176.8 522.2,178.1 518.2,179.2 516.6,181.5 514.3,184.7 513.5,186.9 510.3,187.0 505.6,185.5 502.5,183.1 500.1,180.7 497.0,176.8 497.8,174.4 500.9,172.1 495.4,170.5 499.3,169.7 493.8,167.3 491.5,164.2 486.7,161.8 477.3,161.8 469.4,160.3Z" fill="#e2f1df" stroke-width="1.9"/>
<path d="M484.4,176.8 480.4,179.2 477.3,183.1 472.6,182.6 467.8,181.0 463.1,179.9 458.4,180.3 460.0,178.4 465.5,177.6 466.3,175.2 460.0,172.9 456.8,171.3 452.1,171.3 447.4,170.5 441.1,169.7 440.3,166.6 447.4,165.5 453.7,165.8 458.4,166.9 464.7,168.5 471.0,170.5 474.9,172.9 482.0,176.0Z" fill="#2a6e2a" stroke-width="2.2"/>
<path d="M397.0,172.1 398.6,168.9 395.4,167.3 401.7,166.6 411.2,166.6 415.9,166.9 416.7,169.7 422.2,171.6 420.6,173.2 414.3,173.0 408.0,173.2 402.5,173.3 398.6,172.5Z" fill="#2a6e2a" stroke-width="2.2"/>
<path d="M384.4,168.1 387.5,165.3 393.8,164.7 399.3,165.9 392.3,168.9 387.5,169.4Z" fill="#2a6e2a" stroke-width="2.2"/>
<path d="M439.5,161.1 445.8,161.4 455.2,161.5 458.4,160.3 463.1,157.9 467.8,155.9 478.9,154.0 483.6,151.9 471.0,150.8 455.2,150.8 442.6,151.9 437.9,154.0 441.1,156.3 445.8,157.9 441.1,159.5Z" fill="#2a6e2a" stroke-width="2.2"/>
<path d="M430.0,162.6 436.3,164.0 447.4,164.2 455.2,163.9 454.5,162.5 445.8,162.2 437.9,160.9 431.6,161.1Z" fill="#2a6e2a" stroke-width="2.2"/>
<path d="M397.0,163.1 404.9,164.2 414.3,163.7 415.1,162.2 408.0,161.2 398.6,161.4Z" fill="#2a6e2a" stroke-width="2.2"/>
<path d="M430.0,158.7 437.9,158.4 444.2,156.8 442.6,154.8 434.8,153.7 430.0,155.5 431.6,157.1Z" fill="#2a6e2a" stroke-width="2.2"/>
<path d="M430.0,167.3 434.8,168.1 438.7,166.6 437.9,165.0 431.6,165.0 427.7,165.8Z" fill="#2a6e2a" stroke-width="2.2"/>
<path d="M420.6,168.9 426.9,169.1 428.8,167.3 425.3,165.3 420.6,166.6Z" fill="#2a6e2a" stroke-width="2.2"/>
<path d="M444.2,181.5 450.5,183.1 454.5,181.5 453.7,179.9 448.9,177.9 445.8,178.4Z" fill="#2a6e2a" stroke-width="2.2"/>
<path d="M420.6,162.8 426.9,163.1 427.7,161.4 423.8,160.6 419.0,161.5Z" fill="#2a6e2a" stroke-width="2.2"/>
<path d="M429.3,163.7 433.5,163.9 434.0,162.8 430.8,162.5Z" fill="#2a6e2a" stroke-width="2.2"/>
<path d="M388.3,161.8 393.8,162.2 398.6,160.3 393.8,159.6Z" fill="#2a6e2a" stroke-width="2.2"/>
<path d="M415.1,158.4 423.8,158.8 425.3,157.3 419.0,156.6Z" fill="#2a6e2a" stroke-width="2.2"/>
<path d="M426.9,158.7 432.4,159.0 433.2,157.7 428.5,157.4Z" fill="#2a6e2a" stroke-width="2.2"/>
<path d="M424.5,172.9 429.3,173.5 430.8,172.2 426.9,171.4Z" fill="#2a6e2a" stroke-width="2.2"/>
<path d="M454.5,166.9 460.0,167.2 460.8,165.9 456.0,165.5Z" fill="#2a6e2a" stroke-width="2.2"/>
<path d="M449.7,182.6 453.7,183.6 455.2,182.8 452.1,182.0Z" fill="#2a6e2a" stroke-width="2.2"/>
<path d="M459.2,175.5 462.3,175.7 462.3,174.4 460.0,174.3Z" fill="#2a6e2a" stroke-width="2.2"/>
<path d="M403.3,160.6 408.0,159.6 403.3,158.7Z" fill="#2a6e2a" stroke-width="2.2"/>
<path d="M404.1,158.2 408.0,158.5 408.8,157.4 404.9,157.3Z" fill="#2a6e2a" stroke-width="2.2"/>
<path d="M487.8,206.4 493.0,207.8 497.8,208.0 498.2,206.4 497.0,204.3 493.8,202.8 493.5,200.4 491.1,201.7 489.1,204.3Z" fill="#2a6e2a" stroke-width="1.4"/>
<path d="M379.2,201.7 382.8,203.9 386.7,205.3 386.6,203.9 384.1,202.5 380.8,201.2Z" fill="#2a6e2a" stroke-width="1.4"/>
<path d="M371.8,196.3 373.8,196.6 374.9,199.3 373.1,198.2Z" fill="#2a6e2a" stroke-width="1.4"/>
<path d="M337.9,191.4 341.4,191.1 341.1,189.7 338.7,190.3Z" fill="#1b5a1c" stroke-width="1.4"/>
<path d="M479.6,202.9 483.6,204.2 481.2,203.7Z" fill="#2a6e2a" stroke-width="1.4"/>
<path d="M480.0,207.8 483.3,208.4 482.0,208.9Z" fill="#2a6e2a" stroke-width="1.4"/>
<path d="M447.5,247.0 449.7,245.4 452.9,245.1 456.0,245.9 459.2,247.3 462.3,248.8 464.4,249.7 462.3,250.2 458.9,250.2 459.6,248.9 457.1,247.5 453.7,246.7 451.3,246.2 449.1,246.7Z" fill="#f1f7ef" stroke-width="1.4"/>
<path d="M457.9,252.7 461.1,253.3 460.4,252.4 458.7,252.4Z" fill="#c8e6c5" stroke-width="1.4"/>
<path d="M475.4,253.2 477.8,253.2 477.8,252.4 475.4,252.4Z" fill="#c8e6c5" stroke-width="1.4"/>
<path d="M457.6,239.6 459.5,239.6 459.6,240.4 458.4,239.9Z" fill="#f1f7ef" stroke-width="1.4"/>
<path d="M458.1,242.1 458.9,243.2 459.0,242.1Z" fill="#f1f7ef" stroke-width="1.4"/>
<path d="M483.7,265.6 485.3,265.6 485.2,264.5 484.2,264.7Z" fill="#c8e6c5" stroke-width="1.4"/>
<path d="M469.6,364.8 473.2,364.5 475.7,366.5 478.5,367.6 476.5,368.3 472.6,368.6 469.4,367.8 467.8,366.5Z" fill="#9bd29b" stroke-width="1.4"/>
<path d="M335.6,251.6 337.5,250.6 335.9,249.7Z" fill="#1b5a1c" stroke-width="1.4"/>
<path d="M501.2,281.8 503.3,281.7 505.0,282.6 503.6,284.2 501.2,283.5Z" fill="#5aab5c" stroke-width="1.4"/>
<path d="M479.0,230.8 479.5,230.5 479.5,230.8Z" fill="#2a6e2a" stroke-width="1.4"/>
<path d="M483.9,255.8 484.8,255.7 484.4,256.5Z" fill="#3a8e3c" stroke-width="1.4"/>
<path d="M484.8,258.2 485.5,258.4 485.2,258.8Z" fill="#3a8e3c" stroke-width="1.4"/>
<path d="M485.0,259.6 485.3,259.5 485.3,259.9Z" fill="#f1f7ef" stroke-width="1.4"/>
<path d="M487.2,260.7 487.7,260.6 487.5,261.0Z" fill="#f1f7ef" stroke-width="1.4"/>
<path d="M484.4,257.1 484.8,256.9 484.7,257.6Z" fill="#f1f7ef" stroke-width="1.4"/>
<path d="M483.9,262.4 484.2,262.3 484.2,262.6Z" fill="#f1f7ef" stroke-width="1.4"/>
<path d="M472.4,262.1 473.0,262.4 472.7,262.6Z" fill="#3a8e3c" stroke-width="1.4"/>
<path d="M437.3,282.9 438.2,282.6 437.8,281.8Z" fill="#9bd29b" stroke-width="1.4"/>
<path d="M297.8,173.0 302.5,174.0 306.4,175.7 311.2,176.3 313.8,177.4 312.7,178.4 310.1,178.8 309.6,180.1 304.9,179.5 304.1,178.4 300.2,178.1 297.8,179.0Z" fill="#5aab5c" stroke-width="1.4"/>
<path d="M862.2,169.7 864.6,168.9 864.6,169.9 862.6,170.0Z" fill="#5aab5c" stroke-width="1.4"/>
<path d="M297.8,168.9 301.7,169.2 300.5,169.9 297.8,169.9Z" fill="#5aab5c" stroke-width="1.4"/>
<path d="M760.2,316.9 761.0,315.8 765.1,313.8 768.6,313.0 772.5,312.2 773.8,309.8 775.7,308.7 778.0,305.9 780.4,303.5 782.7,304.8 785.1,305.0 786.7,301.2 789.8,299.6 793.8,300.7 796.6,300.7 795.3,302.8 794.5,305.1 797.7,306.7 800.8,309.1 802.9,309.1 804.1,305.1 804.0,301.7 805.6,298.5 807.1,301.7 807.6,304.3 810.0,305.1 811.1,309.1 811.5,311.4 815.0,313.3 816.6,316.5 818.6,318.5 821.8,321.3 822.4,324.8 822.9,326.8 822.1,330.3 821.0,333.0 818.9,335.5 817.7,338.2 817.2,340.5 814.2,341.2 811.5,343.1 809.5,341.8 807.1,342.6 804.0,341.8 801.6,340.4 800.4,337.7 798.8,337.4 798.8,335.5 798.2,333.5 797.2,335.8 795.3,336.3 794.5,335.8 792.5,333.1 789.8,331.9 787.5,331.1 784.3,331.4 779.6,332.4 776.4,333.5 775.7,334.9 771.7,334.9 769.4,335.7 767.0,336.6 763.8,336.5 762.3,335.5 763.1,332.7 762.6,329.5 761.0,325.6 759.6,322.4 761.0,322.1 759.9,320.1Z" fill="#2a6e2a" stroke-width="1.4"/>
<path d="M809.0,345.6 811.9,346.2 814.7,345.9 814.5,347.9 812.7,350.0 811.1,350.0 809.8,347.9Z" fill="#2a6e2a" stroke-width="1.4"/>
<path d="M853.1,335.8 855.6,337.1 857.5,339.1 858.3,340.7 861.5,340.7 862.2,341.0 861.1,343.2 859.9,343.5 858.8,345.7 857.1,347.0 856.3,346.5 857.1,344.8 854.8,343.5 856.3,342.1 856.1,339.8 853.9,336.9Z" fill="#5aab5c" stroke-width="1.4"/>
<path d="M853.1,345.3 855.6,347.0 854.1,349.2 852.8,350.5 850.8,351.6 850.1,353.8 848.1,354.9 846.2,354.7 843.4,353.9 844.1,352.4 846.5,350.8 849.7,349.0 851.2,347.2Z" fill="#5aab5c" stroke-width="1.4"/>
<path d="M814.7,290.3 817.4,289.7 820.2,288.1 821.0,289.2 819.3,290.6 817.4,291.4 815.5,291.3Z" fill="#f1f7ef" stroke-width="1.4"/>
<path d="M731.2,272.7 734.7,273.3 736.3,275.2 738.7,277.6 740.2,278.0 742.3,279.9 744.2,281.5 744.6,283.1 745.7,284.3 748.1,286.2 747.8,288.6 747.8,290.6 745.7,290.6 743.4,288.6 741.8,287.2 740.2,285.4 739.1,283.1 737.4,281.2 736.6,278.8 734.7,277.1 732.4,275.2 731.2,273.6Z" fill="#9bd29b" stroke-width="1.4"/>
<path d="M746.8,292.2 748.6,290.8 751.2,291.4 754.4,292.2 756.0,291.6 759.1,292.4 761.5,293.8 761.3,295.2 758.3,294.7 754.4,294.3 751.2,293.8 748.9,293.2Z" fill="#9bd29b" stroke-width="1.4"/>
<path d="M769.8,280.2 771.4,279.5 774.1,279.9 777.2,279.0 778.3,279.1 776.9,280.9 773.3,280.7 770.9,281.0 770.5,282.9 772.5,282.9 775.3,282.8 774.5,284.3 773.0,284.5 774.1,286.7 774.5,288.6 773.6,289.4 772.5,288.1 771.7,285.9 770.6,286.2 770.8,290.2 769.4,290.2 769.4,287.0 768.3,285.8 769.2,282.8Z" fill="#9bd29b" stroke-width="1.4"/>
<path d="M769.8,294.7 771.7,294.6 774.9,294.4 774.5,295.4 770.1,295.5Z" fill="#9bd29b" stroke-width="1.4"/>
<path d="M765.1,294.7 767.0,294.4 768.6,294.9 767.0,295.7 765.1,295.7Z" fill="#9bd29b" stroke-width="1.4"/>
<path d="M763.4,294.3 764.9,294.6 764.5,295.5 762.9,295.2Z" fill="#9bd29b" stroke-width="1.4"/>
<path d="M768.6,296.5 770.5,296.3 771.4,297.4 769.7,297.6Z" fill="#9bd29b" stroke-width="1.4"/>
<path d="M781.9,278.4 783.1,279.1 783.8,280.7 782.7,282.8 782.3,280.7 781.8,279.9Z" fill="#9bd29b" stroke-width="1.4"/>
<path d="M782.7,286.2 785.9,286.1 787.1,287.0 784.3,287.2Z" fill="#9bd29b" stroke-width="1.4"/>
<path d="M779.6,286.5 781.5,286.5 781.2,287.6 779.9,287.5Z" fill="#9bd29b" stroke-width="1.4"/>
<path d="M770.9,252.4 773.6,252.4 773.9,254.7 772.7,256.6 773.0,259.0 775.3,259.6 776.6,261.7 775.3,261.0 774.1,260.1 771.7,259.9 771.1,258.7 770.0,255.8 770.8,253.9Z" fill="#9bd29b" stroke-width="1.4"/>
<path d="M773.3,270.5 775.5,269.4 776.1,268.1 778.6,266.2 780.1,268.1 780.4,270.5 779.1,272.1 778.5,270.8 776.4,271.3 775.8,269.8 773.6,270.6Z" fill="#9bd29b" stroke-width="1.4"/>
<path d="M773.3,265.0 774.9,263.4 775.7,265.0 777.2,263.7 779.0,263.4 778.5,265.3 776.8,265.8 775.3,267.0 774.1,266.1Z" fill="#9bd29b" stroke-width="1.4"/>
<path d="M776.9,261.8 778.5,261.8 779.1,264.0 777.9,263.6Z" fill="#9bd29b" stroke-width="1.4"/>
<path d="M770.8,260.4 772.3,260.6 772.3,262.1 771.6,262.0Z" fill="#9bd29b" stroke-width="1.4"/>
<path d="M765.7,268.3 767.8,266.5 769.4,264.5 769.0,263.7 767.0,265.8 765.4,267.6Z" fill="#9bd29b" stroke-width="1.4"/>
<path d="M770.3,245.3 771.7,241.8 773.1,242.1 772.5,244.5 771.4,246.9Z" fill="#9bd29b" stroke-width="1.4"/>
<path d="M752.3,251.3 753.9,249.9 755.8,250.2 755.2,251.9 753.6,252.8 752.3,252.2Z" fill="#1b5a1c" stroke-width="1.4"/>
<path d="M706.8,268.1 707.5,266.1 709.0,268.1 710.2,270.0 709.7,271.4 707.9,272.2 707.0,270.8Z" fill="#c8e6c5" stroke-width="1.4"/>
<path d="M801.6,216.2 803.5,215.7 806.8,215.4 810.3,213.3 809.5,212.1 806.4,211.7 804.5,210.0 804.0,212.4 802.3,213.5 801.5,214.9Z" fill="#5aab5c" stroke-width="1.4"/>
<path d="M787.3,228.0 789.0,228.1 791.1,227.3 793.8,227.0 794.9,228.8 796.6,227.5 799.0,226.9 800.4,226.7 801.5,226.1 802.9,225.3 803.0,223.2 803.2,221.2 804.8,219.1 804.0,216.5 802.1,216.8 801.6,218.5 801.2,220.9 799.4,222.9 797.2,223.6 796.9,222.5 796.4,223.6 795.3,225.1 794.2,225.4 791.4,225.6 789.8,225.8 787.5,227.2Z" fill="#5aab5c" stroke-width="1.4"/>
<path d="M785.6,229.1 787.1,228.1 788.6,228.6 788.9,230.0 787.9,232.1 786.8,232.5 786.2,231.9 786.2,230.0 785.3,229.7Z" fill="#5aab5c" stroke-width="1.4"/>
<path d="M789.5,228.8 791.4,227.7 793.1,227.7 792.7,228.6 791.1,229.1 790.3,229.9Z" fill="#5aab5c" stroke-width="1.4"/>
<path d="M804.8,196.0 806.0,196.2 806.7,198.4 806.7,200.7 807.3,203.6 808.9,204.3 806.7,205.1 806.8,208.0 805.7,208.0 804.8,208.8 804.8,206.2 805.1,203.6 804.8,201.2 804.5,198.8Z" fill="#5aab5c" stroke-width="1.4"/>
<path d="M810.3,212.5 812.3,211.6 815.0,209.9 812.7,210.8Z" fill="#5aab5c" stroke-width="1.4"/>
<path d="M816.6,209.4 818.2,208.6 820.5,207.2 818.6,208.1Z" fill="#5aab5c" stroke-width="1.4"/>
<path d="M662.3,168.5 665.4,165.5 668.6,163.4 672.5,161.8 678.0,161.1 685.1,160.3 689.1,160.6 680.4,162.5 674.1,164.2 670.2,166.6 671.7,169.7 667.8,170.2 663.9,169.7Z" fill="#5aab5c" stroke-width="1.4"/>
<path d="M730.8,156.8 734.7,155.2 738.7,154.0 745.7,157.1 741.8,158.4 736.3,157.4Z" fill="#5aab5c" stroke-width="1.4"/>
<path d="M796.9,162.6 801.6,161.7 809.5,162.3 817.4,162.9 812.7,163.7 804.8,163.6 799.3,163.7Z" fill="#5aab5c" stroke-width="1.4"/>
<path d="M801.6,165.1 805.6,165.1 807.1,166.1 802.4,166.1Z" fill="#5aab5c" stroke-width="1.4"/>
<path d="M542.9,178.2 545.8,177.0 548.9,178.1 552.9,177.3 556.0,176.8 558.4,177.9 559.8,179.2 557.9,180.3 554.4,181.0 551.3,181.7 548.1,181.0 545.5,181.0 546.7,180.1 543.4,179.3 546.6,178.8Z" fill="#c8e6c5" stroke-width="1.4"/>
<path d="M572.2,202.6 575.7,202.3 579.6,201.7 583.2,201.0 582.0,200.4 583.9,198.7 581.7,198.1 581.5,197.1 580.9,195.8 578.8,194.9 578.1,193.5 576.2,193.3 578.1,190.8 574.9,190.8 576.3,189.2 573.3,189.2 572.2,191.0 571.4,192.5 573.0,193.6 573.6,195.1 575.8,195.1 576.5,196.8 576.3,197.6 574.1,197.6 574.6,199.2 573.0,199.9 576.2,200.6 574.6,201.0Z" fill="#2a6e2a" stroke-width="1.4"/>
<path d="M600.9,221.7 602.5,221.4 605.8,221.4 605.0,223.2 603.7,223.6 600.9,222.3Z" fill="#3a8e3c" stroke-width="1.4"/>
<path d="M594.3,217.1 595.7,216.6 596.6,217.7 596.3,219.8 595.1,220.3 594.4,219.3Z" fill="#3a8e3c" stroke-width="1.4"/>
<path d="M594.7,214.7 596.0,213.8 596.2,215.5 595.7,216.3 594.9,215.7Z" fill="#3a8e3c" stroke-width="1.4"/>
<path d="M618.4,225.6 620.6,225.8 622.6,226.1 620.6,226.5 618.4,226.1Z" fill="#5aab5c" stroke-width="1.4"/>
<path d="M632.1,226.4 633.2,225.9 635.7,225.3 634.7,226.4 633.2,227.0Z" fill="#9bd29b" stroke-width="1.4"/>
<path d="M585.0,219.1 586.2,218.7 586.6,219.3 585.8,219.6Z" fill="#3a8e3c" stroke-width="1.4"/>
<path d="M598.5,194.1 600.1,193.2 601.0,193.8 600.4,194.9 599.0,194.7Z" fill="#5aab5c" stroke-width="1.4"/>
<path d="M596.6,194.1 598.0,194.1 598.0,194.9 596.9,194.9Z" fill="#5aab5c" stroke-width="1.4"/>
<path d="M609.7,191.4 611.0,190.3 611.1,191.1 610.0,191.9Z" fill="#5aab5c" stroke-width="1.4"/>
<path d="M607.0,192.9 608.0,191.3 607.5,192.9Z" fill="#5aab5c" stroke-width="1.4"/>
<path d="M615.7,189.9 617.3,189.2 617.7,189.5 616.3,190.2Z" fill="#9bd29b" stroke-width="1.4"/>
<path d="M569.5,183.9 571.0,183.4 570.8,184.7Z" fill="#5aab5c" stroke-width="1.4"/>
<path d="M578.7,187.0 579.6,185.9 579.9,186.7Z" fill="#2a6e2a" stroke-width="1.4"/>
<path d="M569.5,191.0 571.3,189.5 571.1,190.5Z" fill="#2a6e2a" stroke-width="1.4"/>
<path d="M658.8,300.4 660.4,305.4 660.4,306.5 659.1,308.7 658.4,312.7 656.8,316.9 655.5,320.5 652.8,321.6 650.8,320.5 649.5,317.7 649.4,315.8 651.1,313.0 650.8,309.8 650.8,307.5 652.8,306.7 654.9,305.9 656.8,303.5 658.0,301.3Z" fill="#e2f1df" stroke-width="1.4"/>
<path d="M665.3,261.8 666.9,261.7 666.2,262.1Z" fill="#c8e6c5" stroke-width="1.4"/>
<path d="M642.9,290.6 643.4,291.3 643.1,291.6Z" fill="#c8e6c5" stroke-width="1.4"/>
<path d="M649.4,299.8 649.7,300.2 649.2,300.2Z" fill="#f1f7ef" stroke-width="1.4"/>
<path d="M668.3,314.6 669.1,314.7 668.7,315.2Z" fill="#3a8e3c" stroke-width="1.4"/>
<path d="M671.6,313.1 672.2,313.3 671.7,313.8Z" fill="#c8e6c5" stroke-width="1.4"/>
<path d="M554.6,236.9 555.7,236.6 555.2,237.4Z" fill="#3a8e3c" stroke-width="1.4"/>
<path d="M558.8,236.6 559.5,236.2 559.3,237.1Z" fill="#3a8e3c" stroke-width="1.4"/>
<path d="M543.9,257.7 544.4,257.6 544.2,258.0Z" fill="#f1f7ef" stroke-width="1.4"/>
<path d="M594.6,275.7 595.2,275.8 594.9,276.3Z" fill="#f1f7ef" stroke-width="1.4"/>
<path d="M839.4,313.3 841.8,314.9 844.1,316.6 843.0,316.5 840.7,314.9Z" fill="#3a8e3c" stroke-width="1.4"/>
<path d="M860.4,309.1 862.4,309.1 862.1,310.2 860.5,310.0Z" fill="#c8e6c5" stroke-width="1.4"/>
<path d="M862.7,307.6 864.5,307.2 863.8,308.0Z" fill="#c8e6c5" stroke-width="1.4"/>
<path d="M843.5,305.1 844.5,305.7 844.1,306.2Z" fill="#f1f7ef" stroke-width="1.4"/>
<path d="M844.6,307.0 845.7,307.6 844.9,307.6Z" fill="#f1f7ef" stroke-width="1.4"/>
<path d="M827.6,292.0 829.2,293.0 830.8,293.9 828.9,293.5Z" fill="#f1f7ef" stroke-width="1.4"/>
<path d="M832.6,296.1 834.4,296.9 833.6,297.1Z" fill="#f1f7ef" stroke-width="1.4"/>
<path d="M834.2,294.7 835.2,296.1 834.7,296.3Z" fill="#f1f7ef" stroke-width="1.4"/>
<path d="M824.8,290.2 826.7,292.0 825.7,291.9Z" fill="#f1f7ef" stroke-width="1.4"/>
<path d="M818.6,285.6 821.3,287.0 822.1,288.6 821.0,287.6Z" fill="#f1f7ef" stroke-width="1.4"/>
<path d="M309.3,302.8 311.2,303.4 309.9,303.2Z" fill="#f1f7ef" stroke-width="1.4"/>
<g clip-path="url(#cBo)"><path d="M752.8,279.1 753.9,278.4 756.0,279.0 756.8,277.6 759.1,276.5 760.7,274.4 762.7,273.6 764.2,271.6 765.4,270.5 766.5,271.6 768.6,273.2 767.3,274.7 766.5,276.0 767.0,277.9 768.6,279.9 766.7,280.6 766.2,282.8 764.6,283.9 764.3,286.2 763.8,287.8 761.8,287.8 759.9,286.9 757.2,287.0 754.7,286.2 754.4,283.9 752.8,282.3 752.8,280.7Z" fill="#9bd29b" stroke="none"/><path d="M753.8,278.2 754.4,279.6 756.0,279.9 757.9,279.1 760.4,279.5 761.6,279.1 762.3,277.6 763.5,274.7 766.2,274.9 769.4,274.9 769.4,268.9 760.7,268.9 752.8,276.8Z" fill="#74c476"/></g><path d="M752.8,279.1 753.9,278.4 756.0,279.0 756.8,277.6 759.1,276.5 760.7,274.4 762.7,273.6 764.2,271.6 765.4,270.5 766.5,271.6 768.6,273.2 767.3,274.7 766.5,276.0 767.0,277.9 768.6,279.9 766.7,280.6 766.2,282.8 764.6,283.9 764.3,286.2 763.8,287.8 761.8,287.8 759.9,286.9 757.2,287.0 754.7,286.2 754.4,283.9 752.8,282.3 752.8,280.7Z" fill="none" stroke-width="1.4"/>
<g clip-path="url(#cNg)"><path d="M787.5,282.8 789.8,282.1 792.2,282.8 792.5,285.3 793.8,286.7 796.1,285.0 798.5,284.0 803.2,285.6 806.4,286.9 809.2,287.6 811.1,290.2 813.4,290.9 814.1,292.5 814.2,294.1 816.6,296.0 818.6,297.6 817.4,298.3 813.4,297.2 811.1,294.9 808.7,293.6 807.1,294.6 806.4,296.1 803.2,295.8 800.1,294.4 798.2,294.7 799.7,292.8 798.5,290.2 794.5,288.4 791.4,287.5 790.3,288.0 789.0,285.9 791.4,285.3 789.3,285.0 787.5,283.7Z" fill="#9bd29b" stroke="none"/><path d="M803.2,281.5 820.5,281.5 820.5,300.4 803.2,300.4Z" fill="#f1f7ef"/></g><path d="M787.5,282.8 789.8,282.1 792.2,282.8 792.5,285.3 793.8,286.7 796.1,285.0 798.5,284.0 803.2,285.6 806.4,286.9 809.2,287.6 811.1,290.2 813.4,290.9 814.1,292.5 814.2,294.1 816.6,296.0 818.6,297.6 817.4,298.3 813.4,297.2 811.1,294.9 808.7,293.6 807.1,294.6 806.4,296.1 803.2,295.8 800.1,294.4 798.2,294.7 799.7,292.8 798.5,290.2 794.5,288.4 791.4,287.5 790.3,288.0 789.0,285.9 791.4,285.3 789.3,285.0 787.5,283.7Z" fill="none" stroke-width="1.4"/>
<g clip-path="url(#cIr)"><path d="M565.5,200.3 568.3,200.1 571.4,199.3 571.8,197.3 572.4,195.7 571.4,194.6 569.4,194.4 568.0,195.7 565.5,196.2 566.2,197.6 565.8,198.8Z" fill="#5aab5c" stroke="none"/><path d="M568.3,195.7 570.2,196.3 571.8,196.5 573.3,195.7 571.8,194.0 569.4,194.1Z" fill="#2a6e2a"/></g><path d="M565.5,200.3 568.3,200.1 571.4,199.3 571.8,197.3 572.4,195.7 571.4,194.6 569.4,194.4 568.0,195.7 565.5,196.2 566.2,197.6 565.8,198.8Z" fill="none" stroke-width="1.4"/>
<g clip-path="url(#cTi)"><path d="M775.7,297.7 778.0,295.4 781.5,294.7 780.4,296.1 778.0,297.2Z" fill="#9bd29b" stroke="none"/><path d="M778.0,294.1 782.7,294.1 782.7,297.2 778.0,297.2Z" fill="#f1f7ef"/></g><path d="M775.7,297.7 778.0,295.4 781.5,294.7 780.4,296.1 778.0,297.2Z" fill="none"/>
<g clip-path="url(#cHi)"><path d="M464.1,252.5 467.0,253.0 468.5,253.6 471.0,252.7 473.5,252.5 472.1,251.3 470.2,250.3 468.2,250.3 465.8,250.2 466.9,251.6 464.7,252.1Z" fill="#f1f7ef" stroke="none"/><path d="M468.3,249.2 475.7,249.2 475.7,254.7 468.2,254.7Z" fill="#c8e6c5"/></g><path d="M464.1,252.5 467.0,253.0 468.5,253.6 471.0,252.7 473.5,252.5 472.1,251.3 470.2,250.3 468.2,250.3 465.8,250.2 466.9,251.6 464.7,252.1Z" fill="none" stroke-width="1.4"/>
</g>
</svg>
<svg class="abs" style="left:14px;top:68px" width="40" height="106" viewBox="280 139 40 106">
<rect x="290.3" y="141" width="15.6" height="48" rx="7.8" fill="#054a05"/>
<rect x="282" y="156.8" width="33" height="16.4" rx="8.2" fill="#054a05"/>
<path d="M298.1,144.6 L302.9,152.8 L293.3,152.8Z M298.1,185.4 L302.9,177.2 L293.3,177.2Z M284.6,165 L293.2,160 L293.2,170Z M311.6,165 L303,160 L303,170Z" fill="#fff"/>
<rect x="290.3" y="194" width="15.6" height="48" rx="7.8" fill="#054a05"/>
<path d="M294.1,203 H302.1 M298.1,199 V207 M294.4,233.5 H301.8" stroke="#fff" stroke-width="1.9" fill="none"/>
<circle cx="298.1" cy="218.2" r="6.3" fill="#dfe4f7" stroke="#7d86b8" stroke-width="0.9"/>
<path d="M291.8,218.2 H304.4 M298.1,211.9 V224.5 M293,214.7 H303.2 M293,221.7 H303.2" stroke="#6a74ad" stroke-width="0.6" fill="none"/>
<ellipse cx="298.1" cy="218.2" rx="3" ry="6.3" fill="none" stroke="#6a74ad" stroke-width="0.6"/>
</svg>
<div class="abs" style="left:14px;top:360px;width:130px;height:18px;background:linear-gradient(90deg,#ffffff 0%,#e4f1e2 12%,#a7d3a3 40%,#5fa85c 62%,#1f7a1f 82%,#045404 100%)"></div>
<div class="abs" style="left:10px;top:359.5px;font-size:11px;line-height:12px;color:#111">0</div>
<div class="abs" style="left:90px;top:359.5px;font-size:11px;line-height:12px;color:#111;letter-spacing:-.1px">79,769</div>
  <div class="abs" style="left:0;top:387px;width:644px;height:1px;background:#d9d9d9"></div>
<div class="abs fb" style="left:18px;top:394px;font-size:14px;line-height:16px;white-space:nowrap;letter-spacing:-.2px;color:#333">Report View by Selection</div>
<div class="abs fb" style="left:561px;top:394px;font-size:14px;line-height:16px;white-space:nowrap;letter-spacing:-.35px;color:#0b4f6e">Customize</div>
<div class="abs" style="left:0;top:453px;width:624px;height:312px;overflow:hidden;background:#fbfbfb">
<div class="row" style="top:-4px;height:25px;background:#fbfbfb">
<span class="num" style="right:582.0px;top:2.9px">1</span>
<span class="nm fb" style="left:62px;top:5.4px;line-height:11px"><span style="letter-spacing:-0.30px">ENGINEERING</span></span>
<span class="num" style="right:342.2px;top:2.9px">8,208</span>
<span class="num" style="right:214.2px;top:2.9px">162,229</span>
<span class="num" style="right:109.0px;top:2.9px">19.76</span>
<span class="bar" style="top:4.0px"><i style="width:88px"></i><b class="w">212</b></span>
</div>
<div class="row" style="top:21px;height:31px;background:#fbfbfb">
<span class="num" style="right:582.0px;top:5.9px">2</span>
<span class="nm fb" style="left:62px;top:2.3px;line-height:11px"><span style="letter-spacing:-0.01px">MATERIALS</span><br><span style="letter-spacing:-0.33px">SCIENCE</span></span>
<span class="num" style="right:342.2px;top:5.9px">5,519</span>
<span class="num" style="right:214.2px;top:5.9px">137,021</span>
<span class="num" style="right:109.0px;top:5.9px">24.83</span>
<span class="bar" style="top:7.0px"><i style="width:45px"></i><b class="">108</b></span>
</div>
<div class="row" style="top:52px;height:23px;background:#fbfbfb">
<span class="num" style="right:582.0px;top:1.9px">3</span>
<span class="nm fb" style="left:62px;top:4.4px;line-height:11px"><span style="letter-spacing:-0.30px">CHEMISTRY</span></span>
<span class="num" style="right:342.2px;top:1.9px">4,195</span>
<span class="num" style="right:214.2px;top:1.9px">93,823</span>
<span class="num" style="right:109.0px;top:1.9px">22.37</span>
<span class="bar" style="top:3.0px"><i style="width:39px"></i><b class="">93</b></span>
</div>
<div class="row" style="top:75px;height:31px;background:#fbfbfb">
<span class="num" style="right:582.0px;top:5.9px">4</span>
<span class="nm fb" style="left:62px;top:2.3px;line-height:11px"><span style="letter-spacing:-0.30px">ENVIRONMENT/E</span><br><span style="letter-spacing:-0.22px">COLOGY</span></span>
<span class="num" style="right:342.2px;top:5.9px">2,105</span>
<span class="num" style="right:214.2px;top:5.9px">54,956</span>
<span class="num" style="right:109.0px;top:5.9px">26.11</span>
<span class="bar" style="top:7.0px"><i style="width:22px"></i><b class="">52</b></span>
</div>
<div class="row" style="top:106px;height:31px;background:#fbfbfb">
<span class="num" style="right:582.0px;top:5.9px">5</span>
<span class="nm fb" style="left:62px;top:2.3px;line-height:11px"><span style="letter-spacing:-0.31px">COMPUTER</span><br><span style="letter-spacing:-0.33px">SCIENCE</span></span>
<span class="num" style="right:342.2px;top:5.9px">2,220</span>
<span class="num" style="right:214.2px;top:5.9px">46,741</span>
<span class="num" style="right:109.0px;top:5.9px">21.05</span>
<span class="bar" style="top:7.0px"><i style="width:32px"></i><b class="">76</b></span>
</div>
<div class="row" style="top:137px;height:23px;background:#fbfbfb">
<span class="num" style="right:582.0px;top:1.9px">6</span>
<span class="nm fb" style="left:62px;top:4.4px;line-height:11px"><span style="letter-spacing:-0.30px">PHYSICS</span></span>
<span class="num" style="right:342.2px;top:1.9px">1,865</span>
<span class="num" style="right:214.2px;top:1.9px">21,655</span>
<span class="num" style="right:109.0px;top:1.9px">11.61</span>
<span class="bar" style="top:3.0px"><i style="width:10px"></i><b class="">24</b></span>
</div>
<div class="row" style="top:160px;height:31px;background:#fbfbfb">
<span class="num" style="right:582.0px;top:5.9px">7</span>
<span class="nm fb" style="left:62px;top:2.3px;line-height:11px"><span style="letter-spacing:-0.05px">BIOLOGY &amp;</span><br><span style="letter-spacing:-0.25px">BIOCHEMISTRY</span></span>
<span class="num" style="right:342.2px;top:5.9px">422</span>
<span class="num" style="right:214.2px;top:5.9px">8,346</span>
<span class="num" style="right:109.0px;top:5.9px">19.78</span>
<span class="bar" style="top:7.0px"><i style="width:2px"></i><b class="">5</b></span>
</div>
<div class="row" style="top:191px;height:24px;background:#fbfbfb">
<span class="num" style="right:582.0px;top:2.4px">8</span>
<span class="nm fb" style="left:62px;top:4.9px;line-height:11px"><span style="letter-spacing:-0.31px">GEOSCIENCES</span></span>
<span class="num" style="right:342.2px;top:2.4px">477</span>
<span class="num" style="right:214.2px;top:2.4px">7,847</span>
<span class="num" style="right:109.0px;top:2.4px">16.45</span>
<span class="bar" style="top:3.5px"><i style="width:5px"></i><b class="">13</b></span>
</div>
<div class="row" style="top:215px;height:30px;background:#fbfbfb">
<span class="num" style="right:582.0px;top:5.4px">9</span>
<span class="nm fb" style="left:62px;top:1.8px;line-height:11px"><span style="letter-spacing:-0.06px">AGRICULTURAL</span><br><span style="letter-spacing:-0.33px">SCIENCES</span></span>
<span class="num" style="right:342.2px;top:5.4px">334</span>
<span class="num" style="right:214.2px;top:5.4px">6,637</span>
<span class="num" style="right:109.0px;top:5.4px">19.87</span>
<span class="bar" style="top:6.5px"><i style="width:3px"></i><b class="">8</b></span>
</div>
<div class="row" style="top:245px;height:44px;background:#fbfbfb">
<span class="num" style="right:582.0px;top:11.2px">10</span>
<span class="nm fb" style="left:62px;top:1.2px;line-height:12px"><span style="letter-spacing:-0.12px">PHARMACOLOG</span><br><span style="letter-spacing:-0.14px">Y &amp;</span><br><span style="letter-spacing:-0.25px">TOXICOLOGY</span></span>
<span class="num" style="right:342.2px;top:11.2px">241</span>
<span class="num" style="right:214.2px;top:11.2px">4,115</span>
<span class="num" style="right:109.0px;top:11.2px">17.07</span>
<span class="bar" style="top:13.5px"><i style="width:2px"></i><b class="">3</b></span>
</div>
<div class="row" style="top:289px;height:44px;background:#dde6f5">
<span class="num" style="right:582.0px;top:9.4px">11</span>
<span class="nm fb" style="left:62px;top:0.9px;line-height:11px"><span style="letter-spacing:-0.16px">SOCIAL</span><br><span style="letter-spacing:-0.36px">SCIENCES,</span><br><span style="letter-spacing:-0.45px">GENERAL</span></span>
<span class="num" style="right:342.2px;top:9.4px">275</span>
<span class="num" style="right:214.2px;top:9.4px">3,201</span>
<span class="num" style="right:109.0px;top:9.4px">11.64</span>
<span class="bar" style="top:11.2px"><i style="width:3px"></i><b class="">8</b></span>
</div>
</div>
<div class="abs" style="left:0;top:741px;width:10px;height:0;border-top:1px dotted #6f94c8"></div>
<div class="abs" style="left:0;top:419px;width:639px;height:34px;background:#f1f1f1;border-top:1px solid #d4d4d4"></div>
<div class="abs fb" style="left:0.8px;top:420.7px;font-size:14px;line-height:16px;white-space:nowrap;letter-spacing:-0.3px;color:#333;">Total:</div>
<div class="abs fb" style="left:5.8px;top:434.8px;font-size:14px;line-height:16px;white-space:nowrap;letter-spacing:-0.3px;color:#333;">12</div>
<div class="abs fb" style="left:61.6px;top:426.8px;font-size:14px;line-height:16px;white-space:nowrap;letter-spacing:-0.3px;color:#333;">Research Fields</div>
<div class="abs fb" style="left:183.6px;top:420.7px;font-size:14px;line-height:16px;white-space:nowrap;letter-spacing:-0.42px;color:#333;">Web of Science</div>
<div class="abs fb" style="left:191.0px;top:434.8px;font-size:14px;line-height:16px;white-space:nowrap;letter-spacing:-0.3px;color:#333;">Documents</div>
<div class="abs fb" style="left:324.8px;top:426.8px;font-size:14px;line-height:16px;white-space:nowrap;letter-spacing:-0.4px;color:#3f74ad;">Cites</div>
<div class="abs" style="left:359.5px;top:433.5px;width:0;height:0;border-left:3.5px solid transparent;border-right:3.5px solid transparent;border-top:4.5px solid #4a7db5"></div>
<div class="abs fb" style="left:427.3px;top:426.8px;font-size:14px;line-height:16px;white-space:nowrap;letter-spacing:-0.36px;color:#333;">Cites/Paper</div>
<div class="abs fb" style="left:536.6px;top:420.7px;font-size:14px;line-height:16px;white-space:nowrap;letter-spacing:-0.2px;color:#333;">Highly Cited</div>
<div class="abs fb" style="left:547.8px;top:434.8px;font-size:14px;line-height:16px;white-space:nowrap;letter-spacing:-0.35px;color:#333;">Papers</div>
<div class="abs" style="left:9px;top:697px;width:621px;height:47px;border:4px solid #e11b22"></div>
<div class="abs" style="left:627.2px;top:463px;width:0;height:0;border-left:4.5px solid transparent;border-right:4.5px solid transparent;border-bottom:5px solid #9a9a9a"></div>
<div class="abs" style="left:627.5px;top:478px;width:8.5px;height:232px;border-radius:4.5px;background:#8c8c8c"></div>
<div class="abs" style="left:627.2px;top:750.5px;width:0;height:0;border-left:4.5px solid transparent;border-right:4.5px solid transparent;border-top:5px solid #9a9a9a"></div>
<div class="abs" style="left:0;top:765px;width:639px;height:15px;background:#fafafa"></div>
<div class="abs" style="left:8.5px;top:768.5px;width:0;height:0;border-top:4.5px solid transparent;border-bottom:4.5px solid transparent;border-right:5.5px solid #8c8c8c"></div>
<div class="abs" style="left:33px;top:769px;width:564px;height:8px;border-radius:4px;background:#8c8c8c"></div>
<div class="abs" style="left:610px;top:768.5px;width:0;height:0;border-top:4.5px solid transparent;border-bottom:4.5px solid transparent;border-left:5.5px solid #8c8c8c"></div>
 </div>
</div>
<div class="abs" style="right:85px;top:864px;font-size:10.8px;line-height:13px;font-style:italic;color:#161616;text-align:right;white-space:nowrap">InCites Essential Science Indicators dataset updated Nov 13, 2025.<br>For more information <span style="color:#1d5c7e">Click Here</span></div>
</body>
</html>
